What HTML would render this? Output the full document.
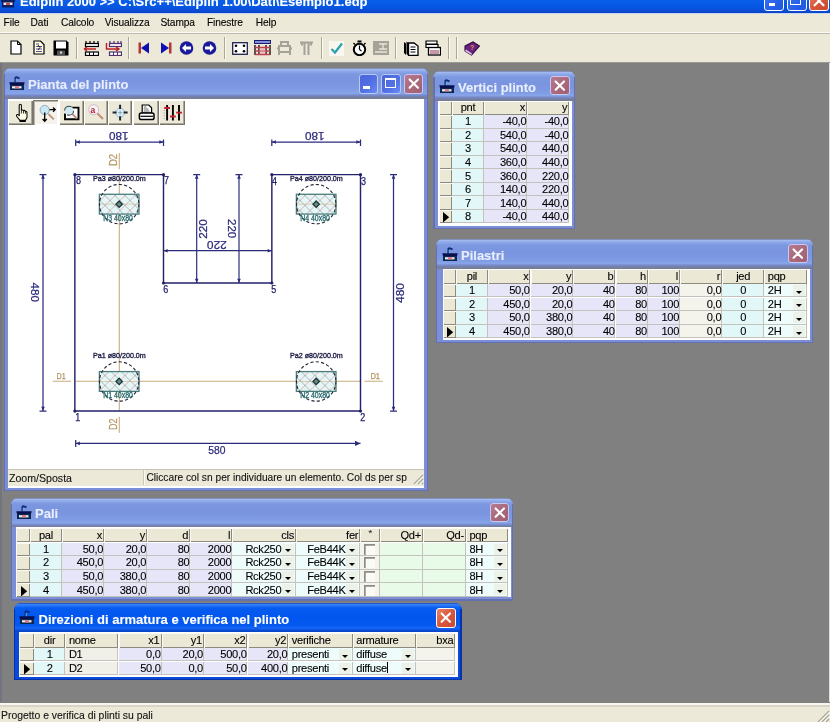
<!DOCTYPE html><html><head><meta charset="utf-8"><style>html,body{margin:0;padding:0;width:830px;height:722px;overflow:hidden;background:#808080;font-family:"Liberation Sans",sans-serif;}div{-webkit-text-stroke:0.1px currentColor}</style></head><body><div style="position:relative;width:830px;height:722px;overflow:hidden;filter:blur(0.3px)">
<div style="position:absolute;left:0.00px;top:0.00px;width:830.00px;height:13.00px;background:linear-gradient(#0a5ee8 0px,#0558e4 6px,#0a4ed8 10px,#0c44c4 13px)"></div>
<div style="position:absolute;left:20.00px;top:-4.80px;font-size:13px;line-height:13px;color:#fff;font-weight:bold;white-space:nowrap;">Ediplin 2000 &gt;&gt; C:\Src++\Ediplin 1.00\Dati\Esempio1.edp</div>
<svg style="position:absolute;left:0;top:-6px" width="16" height="14" viewBox="0 0 16 14"><path d="M0.5 6 H15.5 L14 9 V13.5 H2 V9 Z" fill="#0c1c5c"/><rect x="3.5" y="8.5" width="9" height="2.5" fill="#e8e8f0"/><rect x="6" y="8.8" width="4" height="2" fill="#c04040"/></svg>
<div style="position:absolute;left:764.40px;top:-9.00px;width:18.10px;height:18.10px;border:1.2px solid #ffffff;border-radius:3px;background:linear-gradient(135deg,#3a78f4,#2a64ea 50%,#1e56e0)"><div style="position:absolute;left:3.3px;top:11.2px;width:6.7px;height:3px;background:#fff"></div></div>
<div style="position:absolute;left:786.60px;top:-9.00px;width:18.10px;height:18.10px;border:1.2px solid #ffffff;border-radius:3px;background:linear-gradient(135deg,#3a78f4,#2a64ea 50%,#1e56e0)"><div style="position:absolute;left:2.7px;top:3.3px;width:8.6px;height:6.6px;border:1.3px solid #fff;border-top-width:2.7px"></div></div>
<div style="position:absolute;left:808.90px;top:-9.00px;width:18.10px;height:18.10px;border:1.2px solid #ffffff;border-radius:3px;background:linear-gradient(135deg,#e9826a,#d8573c 50%,#c94a30)"><svg width="18.10" height="18.10" style="position:absolute;left:0;top:0"><path d="M4.6 4.4 L13.50 13.30 M13.50 4.4 L4.6 13.30" stroke="#fff" stroke-width="2.1" stroke-linecap="round"/></svg></div>
<div style="position:absolute;left:0.00px;top:13.00px;width:830.00px;height:20.00px;background:#ece9d8"></div>
<div style="position:absolute;left:0.00px;top:13.00px;width:830.00px;height:1.00px;background:#c9d6f0"></div>
<div style="position:absolute;left:0.00px;top:31.80px;width:830.00px;height:1.00px;background:#fbfaf5"></div>
<div style="position:absolute;left:0.00px;top:32.80px;width:830.00px;height:1.20px;background:#bdb9ab"></div>
<div style="position:absolute;left:0.00px;top:34.00px;width:830.00px;height:1.50px;background:#fbfaf5"></div>
<div style="position:absolute;left:3.60px;top:18.17px;font-size:10.2px;line-height:10.2px;color:#000;font-weight:normal;white-space:nowrap;letter-spacing:-0.1px;">File</div>
<div style="position:absolute;left:30.60px;top:18.17px;font-size:10.2px;line-height:10.2px;color:#000;font-weight:normal;white-space:nowrap;letter-spacing:-0.1px;">Dati</div>
<div style="position:absolute;left:60.90px;top:18.17px;font-size:10.2px;line-height:10.2px;color:#000;font-weight:normal;white-space:nowrap;letter-spacing:-0.1px;">Calcolo</div>
<div style="position:absolute;left:104.80px;top:18.17px;font-size:10.2px;line-height:10.2px;color:#000;font-weight:normal;white-space:nowrap;letter-spacing:-0.1px;">Visualizza</div>
<div style="position:absolute;left:160.40px;top:18.17px;font-size:10.2px;line-height:10.2px;color:#000;font-weight:normal;white-space:nowrap;letter-spacing:-0.1px;">Stampa</div>
<div style="position:absolute;left:206.90px;top:18.17px;font-size:10.2px;line-height:10.2px;color:#000;font-weight:normal;white-space:nowrap;letter-spacing:-0.1px;">Finestre</div>
<div style="position:absolute;left:255.80px;top:18.17px;font-size:10.2px;line-height:10.2px;color:#000;font-weight:normal;white-space:nowrap;letter-spacing:-0.1px;">Help</div>
<div style="position:absolute;left:0.00px;top:34.00px;width:830.00px;height:28.00px;background:#ece9d8"></div>
<div style="position:absolute;left:0.00px;top:62.00px;width:830.00px;height:1.00px;background:#9c9a90"></div>
<svg style="position:absolute;left:10.00px;top:40.00px" width="12" height="15" viewBox="0 0 12 15"><path d="M1 1 H7.5 L11 4.5 V14 H1 Z" fill="#fff" stroke="#000" stroke-width="1.2"/><path d="M7.5 1 V4.5 H11" fill="none" stroke="#000" stroke-width="1"/></svg>
<svg style="position:absolute;left:32.50px;top:40.00px" width="12" height="15" viewBox="0 0 12 15"><path d="M1 1 H7.5 L11 4.5 V14 H1 Z" fill="#fffce0" stroke="#000" stroke-width="1.2"/><path d="M3 4 H6 M3 6.5 H9 M3 9 H9 M3 11.5 H9" stroke="#5050a0" stroke-width="1"/><path d="M5 5 L7 7.5 L5 10" stroke="#000" stroke-width="0.8" fill="none"/></svg>
<svg style="position:absolute;left:53.00px;top:39.50px" width="16" height="16" viewBox="0 0 16 16"><path d="M0.5 0.5 H13.5 L15.5 2.5 V15.5 H0.5 Z" fill="#000"/><rect x="3" y="1.5" width="10" height="7" fill="#fff"/><rect x="4" y="10.5" width="8" height="5" fill="#555"/><rect x="7" y="11.5" width="2" height="2" fill="#ddd"/></svg>
<div style="position:absolute;left:75.50px;top:37.00px;width:1.00px;height:22.00px;background:#aca899"></div>
<div style="position:absolute;left:76.50px;top:37.00px;width:1.00px;height:22.00px;background:#fbfaf4"></div>
<svg style="position:absolute;left:83.00px;top:40.00px" width="16" height="16" viewBox="0 0 16 16"><path d="M3 1 V4 M7 1 V4 M11 1 V4 M15 1 V4" stroke="#000" stroke-width="1.2"/><rect x="2.5" y="3.5" width="13" height="3" fill="#fff" stroke="#000" stroke-width="1.2"/><path d="M1 9 H13 M1 9 L4 7 M1 9 L4 11" stroke="#c02020" stroke-width="1.4" fill="none"/><rect x="2.5" y="12" width="13" height="3.5" fill="#fff" stroke="#000" stroke-width="1.2"/><path d="M6.5 12 V15.5 M10.5 12 V15.5" stroke="#000" stroke-width="1"/></svg>
<svg style="position:absolute;left:104.50px;top:40.00px" width="17" height="16" viewBox="0 0 17 16"><path d="M5 1 V4 M9 1 V4 M13 1 V4 M16 1 V4" stroke="#503070" stroke-width="1.2"/><rect x="4.5" y="3.5" width="12" height="3" fill="#fff" stroke="#503070" stroke-width="1.2"/><path d="M1.5 3 V9 H14 M11 7 L14 9 L11 11" stroke="#c02020" stroke-width="1.4" fill="none"/><rect x="4.5" y="12" width="12" height="3.5" fill="#fff" stroke="#503070" stroke-width="1.2"/><path d="M8.5 12 V15.5 M12.5 12 V15.5" stroke="#503070" stroke-width="1"/></svg>
<div style="position:absolute;left:127.50px;top:37.00px;width:1.00px;height:22.00px;background:#aca899"></div>
<div style="position:absolute;left:128.50px;top:37.00px;width:1.00px;height:22.00px;background:#fbfaf4"></div>
<svg style="position:absolute;left:137.50px;top:41.50px" width="12" height="12" viewBox="0 0 12 12"><rect x="0.5" y="0.5" width="2.5" height="11" fill="#b03838"/><path d="M11 0.5 V11.5 L3 6 Z" fill="#1010b0"/></svg>
<svg style="position:absolute;left:159.50px;top:41.50px" width="12" height="12" viewBox="0 0 12 12"><rect x="9" y="0.5" width="2.5" height="11" fill="#b03838"/><path d="M1 0.5 V11.5 L9 6 Z" fill="#1010b0"/></svg>
<svg style="position:absolute;left:179.00px;top:41.00px" width="15" height="14" viewBox="0 0 15 14"><circle cx="7.5" cy="7" r="6.8" fill="#1a1a9a"/><path d="M3 7 L7 3 V5.5 H12 V8.5 H7 V11 Z" fill="#fff"/></svg>
<svg style="position:absolute;left:201.70px;top:41.00px" width="15" height="14" viewBox="0 0 15 14"><circle cx="7.5" cy="7" r="6.8" fill="#1a1a9a"/><path d="M12 7 L8 3 V5.5 H3 V8.5 H8 V11 Z" fill="#fff"/></svg>
<div style="position:absolute;left:224.00px;top:37.00px;width:1.00px;height:22.00px;background:#aca899"></div>
<div style="position:absolute;left:225.00px;top:37.00px;width:1.00px;height:22.00px;background:#fbfaf4"></div>
<svg style="position:absolute;left:231.50px;top:41.50px" width="16" height="13" viewBox="0 0 16 13"><rect x="0.7" y="0.7" width="14.6" height="11.6" fill="#fff" stroke="#202050" stroke-width="1.3"/><circle cx="4" cy="3.8" r="1.3" fill="#000"/><circle cx="12" cy="3.8" r="1.3" fill="#000"/><circle cx="4" cy="9.2" r="1.3" fill="#000"/><circle cx="12" cy="9.2" r="1.3" fill="#000"/></svg>
<svg style="position:absolute;left:254.00px;top:40.00px" width="17" height="16" viewBox="0 0 17 16"><rect x="0.5" y="0.5" width="16" height="3" fill="#8090e0" stroke="#1a1a6a" stroke-width="1"/><path d="M1 5 V15 M16 5 V15 M5 5 V15 M12 5 V15" stroke="#000" stroke-width="1.3"/><path d="M1 7.5 H16 M1 11 H16 M1 14.5 H16" stroke="#c04050" stroke-width="1.5"/><rect x="5.5" y="8" width="6" height="6" fill="#f0a0b0" opacity="0.6"/></svg>
<svg style="position:absolute;left:275.50px;top:40.50px" width="17" height="15" viewBox="0 0 17 15"><path d="M5 1 H12 V5 H5 Z M3 5 H14 V11 H3 Z M1 7.5 H4 M13 7.5 H16 M3 12 V14 M14 12 V14" fill="none" stroke="#a6a298" stroke-width="2"/></svg>
<svg style="position:absolute;left:299.00px;top:40.50px" width="15" height="15" viewBox="0 0 15 15"><path d="M1 1.5 H14 M3 1.5 V4.5 M12 1.5 V4.5 M5.5 2 V14 M9.5 2 V14" stroke="#a6a298" stroke-width="2" fill="none"/></svg>
<div style="position:absolute;left:320.80px;top:37.00px;width:1.00px;height:22.00px;background:#aca899"></div>
<div style="position:absolute;left:321.80px;top:37.00px;width:1.00px;height:22.00px;background:#fbfaf4"></div>
<svg style="position:absolute;left:329.00px;top:40.50px" width="15" height="15" viewBox="0 0 15 15"><rect x="0" y="0" width="15" height="15" fill="#f8f6ee"/><path d="M2.5 8 L6 11.5 L13 2.5" stroke="#2aa0b0" stroke-width="2.2" fill="none"/></svg>
<svg style="position:absolute;left:351.80px;top:40.00px" width="15" height="16" viewBox="0 0 15 16"><rect x="5.5" y="0.5" width="4" height="2" fill="#000"/><path d="M1.5 3 L3 4.5 M13.5 3 L12 4.5" stroke="#000" stroke-width="1.3"/><circle cx="7.5" cy="9.5" r="5.7" fill="#fff" stroke="#000" stroke-width="2"/><path d="M7.5 9.5 V5.5 M7.5 9.5 L9.5 11" stroke="#000" stroke-width="1.2"/></svg>
<svg style="position:absolute;left:373.00px;top:41.00px" width="16" height="14" viewBox="0 0 16 14"><rect x="0" y="0" width="16" height="14" fill="#a6a298"/><path d="M6 3 H14 M10 3 V8 M6 8 H14 M2 11 H14" stroke="#e8e4d8" stroke-width="1.3"/></svg>
<div style="position:absolute;left:394.90px;top:37.00px;width:1.00px;height:22.00px;background:#aca899"></div>
<div style="position:absolute;left:395.90px;top:37.00px;width:1.00px;height:22.00px;background:#fbfaf4"></div>
<svg style="position:absolute;left:403.00px;top:40.00px" width="16" height="16" viewBox="0 0 16 16"><path d="M1 2 V13 L3 15 V3.5 Z M3.5 1.5 V14 L5.5 15.5 V3 Z" fill="#000"/><path d="M5.5 3 H11 L15 6 V15.5 H5.5 Z" fill="#fff" stroke="#000" stroke-width="1.3"/><path d="M7.5 7 H12.5 M7.5 9.5 H12.5 M7.5 12 H12.5" stroke="#000" stroke-width="1"/></svg>
<svg style="position:absolute;left:425.00px;top:40.00px" width="16" height="16" viewBox="0 0 16 16"><path d="M1 1 H12 V4 H1 Z M1 4.5 H13 V7.5 H1 Z" fill="#fff" stroke="#000" stroke-width="1.2"/><rect x="3.5" y="7.5" width="12" height="7.5" fill="#fff" stroke="#000" stroke-width="1.3"/><path d="M5 11 H14 M5 13 H14" stroke="#903050" stroke-width="1.2"/></svg>
<div style="position:absolute;left:447.50px;top:37.00px;width:1.00px;height:22.00px;background:#aca899"></div>
<div style="position:absolute;left:448.50px;top:37.00px;width:1.00px;height:22.00px;background:#fbfaf4"></div>
<div style="position:absolute;left:455.50px;top:37.00px;width:1.00px;height:22.00px;background:#aca899"></div>
<div style="position:absolute;left:456.50px;top:37.00px;width:1.00px;height:22.00px;background:#fbfaf4"></div>
<svg style="position:absolute;left:463.50px;top:40.50px" width="16" height="15" viewBox="0 0 16 15"><path d="M1 5 L9 1 L15.5 5 L7.5 14 L1 10 Z" fill="#6a2080" stroke="#2a0a3a" stroke-width="1.1"/><path d="M1 10 L7.5 14 L8 12.5 L2 8.5" fill="#e0c0e8"/><text x="6.3" y="9" font-family="Liberation Sans" font-weight="bold" font-size="6.5" fill="#f0a040">?</text></svg>
<div style="position:absolute;left:0.00px;top:63.00px;width:830.00px;height:640.00px;background:#808080"></div>
<div style="position:absolute;left:0.00px;top:63.00px;width:2.00px;height:639.00px;background:#74747e"></div>
<div style="position:absolute;left:828.60px;top:63.00px;width:1.40px;height:639.00px;background:#dde1d8"></div>
<div style="position:absolute;left:0.00px;top:702.60px;width:830.00px;height:20.00px;background:#ece9d8"></div>
<div style="position:absolute;left:0.00px;top:702.60px;width:830.00px;height:2.40px;background:#f6f5ee"></div>
<div style="position:absolute;left:0.00px;top:705.00px;width:830.00px;height:2.00px;background:#d9d5c8"></div>
<svg style="position:absolute;left:816px;top:709px" width="14" height="13"><path d="M13 2 L2 13 M13 6 L6 13 M13 10 L10 13" stroke="#a8a492" stroke-width="1.2"/><path d="M13.8 3 L3 13.8 M13.8 7 L7 13.8" stroke="#fff" stroke-width="0.8"/></svg>
<div style="position:absolute;left:1.00px;top:711.10px;font-size:10.4px;line-height:10.4px;color:#111;font-weight:normal;white-space:nowrap;">Progetto e verifica di plinti su pali</div>
<div style="position:absolute;left:3.60px;top:68.30px;width:424.40px;height:423.20px;background:#7a8fd8;border-radius:7px 7px 0 0;overflow:hidden">
<div style="position:absolute;left:0;top:0;width:424.40px;height:30.5px;background:linear-gradient(#6a7498 0px,#a4bcf2 1.2px,#90aaea 3px,#7c98e0 6px,#7a94df 14px,#809ce4 22px,#88a4e8 25.5px,#7488c8 27.5px,#767e9c 29.0px,#767e9c 30.5px)"></div>
<div style="position:absolute;left:0;top:6px;width:1.3px;height:417.20px;background:#6470b0"></div>
<div style="position:absolute;right:0;top:6px;width:1.3px;height:417.20px;background:#6470b0"></div>
<div style="position:absolute;left:0;bottom:0;width:424.40px;height:1.3px;background:#6470b0"></div>
<div style="position:absolute;left:4.70px;top:30.50px;width:416.20px;height:389.00px;background:#fff"></div>
</div>
<svg style="position:absolute;left:9.00px;top:76.00px" width="16" height="15" viewBox="0 0 16 15"><path d="M6.3 6.5 V2.2 Q6.3 1.2 7.5 1.2 L10.5 2.4" stroke="#0e2a78" stroke-width="1.7" fill="none"/><path d="M7.2 3 V6.5" stroke="#7ab8f0" stroke-width="0.9"/><path d="M0.3 6.3 H15.7 L15 9 H1 Z" fill="#08104e"/><rect x="1" y="9" width="14" height="5" fill="#0c2850"/><rect x="3" y="10.2" width="9.5" height="2.2" fill="#e8eef0"/><rect x="6" y="10.2" width="4" height="2.2" fill="#e07888"/></svg>
<div style="position:absolute;left:28.00px;top:77.80px;font-size:13px;line-height:13px;color:#e8eefc;font-weight:bold;white-space:nowrap;">Pianta del plinto</div>
<div style="position:absolute;left:8.30px;top:98.80px;width:416.20px;height:27.20px;background:#fff"></div>
<div style="position:absolute;left:8.20px;top:99.80px;width:25.10px;height:24.80px;background:#ece9d8;box-shadow:inset 1px 1px 0 #ffffff, inset -1px -1px 0 #77756c, inset -2px -2px 0 #aca899"></div>
<div style="position:absolute;left:33.30px;top:99.80px;width:25.20px;height:24.80px;background:#f4f2ea;box-shadow:inset 1px 1px 0 #7c7a70, inset 2px 2px 0 #b8b4a4, inset -1px -1px 0 #ffffff"></div>
<div style="position:absolute;left:58.50px;top:99.80px;width:25.00px;height:24.80px;background:#ece9d8;box-shadow:inset 1px 1px 0 #ffffff, inset -1px -1px 0 #77756c, inset -2px -2px 0 #aca899"></div>
<div style="position:absolute;left:83.50px;top:99.80px;width:24.70px;height:24.80px;background:#ece9d8;box-shadow:inset 1px 1px 0 #ffffff, inset -1px -1px 0 #77756c, inset -2px -2px 0 #aca899"></div>
<div style="position:absolute;left:108.20px;top:99.80px;width:24.30px;height:24.80px;background:#ece9d8;box-shadow:inset 1px 1px 0 #ffffff, inset -1px -1px 0 #77756c, inset -2px -2px 0 #aca899"></div>
<div style="position:absolute;left:132.50px;top:99.80px;width:26.10px;height:24.80px;background:#ece9d8;box-shadow:inset 1px 1px 0 #ffffff, inset -1px -1px 0 #77756c, inset -2px -2px 0 #aca899"></div>
<div style="position:absolute;left:158.60px;top:99.80px;width:26.60px;height:24.80px;background:#ece9d8;box-shadow:inset 1px 1px 0 #ffffff, inset -1px -1px 0 #77756c, inset -2px -2px 0 #aca899"></div>
<svg style="position:absolute;left:0;top:0" width="830" height="722" viewBox="0 0 830 722"><path d="M19.2 114.5 V105.6 Q19.2 104.2 20.3 104.2 Q21.4 104.2 21.4 105.6 V110.3 Q22.6 109.5 23.5 110.5 Q24.8 110 25.4 111.3 Q27 111.2 27 113 V117.5 L25.5 120.2 H19.8 L16.8 116.5 Q16 115 17.2 114.5 Q18.2 114.2 19.2 115.8 Z" fill="#fffde8" stroke="#000" stroke-width="1.05" stroke-linejoin="round"/><path d="M21.4 110.3 V113.5 M23.5 110.5 V113.5 M25.4 111.3 V113.8" stroke="#000" stroke-width="0.8"/><rect x="19.5" y="120" width="6.3" height="2" fill="#000"/><circle cx="44.7" cy="110" r="4.6" fill="#c9e9f2" stroke="#90aec0" stroke-width="1"/><path d="M48.3 113.8 L53.8 119.3" stroke="#c0907a" stroke-width="1.9"/><path d="M44.7 112.5 V121 M42.6 119 L44.7 121.2 L46.8 119" stroke="#000" stroke-width="1.3" fill="none"/><path d="M49.5 109.6 H55 M53 107.5 L55.2 109.6 L53 111.7" stroke="#000" stroke-width="1.3" fill="none"/><path d="M69 107.6 H78.5 V119.3 H65 V113.5" fill="#fff" stroke="#000" stroke-width="1.9"/><circle cx="69.1" cy="110.7" r="4.5" fill="#cfe8f2" stroke="#3a4a50" stroke-width="1.1" stroke-dasharray="9 5"/><path d="M72.4 114 L77 118.6" stroke="#c0907a" stroke-width="1.9"/><circle cx="93.7" cy="109.7" r="5" fill="#f6f4f8" stroke="#d8c4cc" stroke-width="1.2"/><text x="90.6" y="112.8" font-family="Liberation Sans" font-weight="bold" font-size="8.5" fill="#b01830">a</text><path d="M97.5 113.5 L103 119" stroke="#c0907a" stroke-width="2"/><circle cx="120.1" cy="112.6" r="4.5" fill="#d6ecf6" stroke="#a8bccc" stroke-width="1"/><path d="M120.1 104.8 V109 M120.1 116.2 V120.4 M112.6 112.6 H116.6 M123.6 112.6 H127.6" stroke="#1a2630" stroke-width="2"/><path d="M120.1 110.5 V114.7 M118 112.6 H122.2" stroke="#7890a0" stroke-width="0.7"/><path d="M142.2 105 H148.8 L151.6 107.8 V113.2 H142.2 Z" fill="#fff" stroke="#000" stroke-width="1.2"/><path d="M143.8 107 H146.5 M143.8 109 H148.5 M143.8 111 H149.5" stroke="#444" stroke-width="0.8"/><rect x="139.4" y="113" width="14.6" height="6.6" rx="1.8" fill="#fff" stroke="#000" stroke-width="1.5"/><path d="M140.5 116.3 H153" stroke="#000" stroke-width="1.2"/><path d="M167.1 105 V120.4 M172.9 105 V120.4 M179 105 V120.4" stroke="#000" stroke-width="1.9"/><path d="M164.2 108 H170 M170 116.5 H175.8 M176.2 112.6 H182" stroke="#c81c30" stroke-width="1.9"/><path d="M164.2 110 V120" stroke="#9a9a9a" stroke-width="1" stroke-dasharray="1 1.6"/></svg>
<div style="position:absolute;left:8.30px;top:468.50px;width:416.20px;height:19.30px;background:#fff"></div>
<div style="position:absolute;left:8.30px;top:468.60px;width:416.20px;height:17.00px;background:#ece9d8;box-shadow:inset 0 1px 0 #c9c5b5"></div>
<div style="position:absolute;left:142.60px;top:469.50px;width:1.00px;height:15.00px;background:#cdc9b9"></div>
<div style="position:absolute;left:143.60px;top:469.50px;width:1.20px;height:15.00px;background:#fbfaf2"></div>
<div style="position:absolute;left:9.00px;top:473.13px;font-size:10.6px;line-height:10.6px;color:#111;font-weight:normal;white-space:nowrap;">Zoom/Sposta</div>
<div style="position:absolute;left:146.40px;top:473.47px;font-size:10.2px;line-height:10.2px;color:#111;font-weight:normal;white-space:nowrap;">Cliccare col sn per individuare un elemento. Col ds per sp</div>
<svg style="position:absolute;left:411.5px;top:473px" width="12" height="13"><path d="M11 2 L2 11 M11 6 L6 11 M11 10 L10 11" stroke="#a8a492" stroke-width="1.2"/><path d="M11.5 3 L3 11.5 M11.5 7 L7 11.5" stroke="#fff" stroke-width="0.8"/></svg>
<div style="position:absolute;left:358.60px;top:74.20px;width:17.60px;height:17.60px;border:1.2px solid #b9c8f6;border-radius:3px;background:linear-gradient(135deg,#4a66d8,#5272e6 60%,#6a8cf4)"><div style="position:absolute;left:3.3px;top:11.2px;width:6.7px;height:3px;background:#fff"></div></div>
<div style="position:absolute;left:381.30px;top:74.20px;width:17.60px;height:17.60px;border:1.2px solid #b9c8f6;border-radius:3px;background:linear-gradient(135deg,#4a66d8,#5272e6 60%,#6a8cf4)"><div style="position:absolute;left:2.7px;top:3.3px;width:8.6px;height:6.6px;border:1.3px solid #fff;border-top-width:2.7px"></div></div>
<div style="position:absolute;left:403.50px;top:74.20px;width:17.60px;height:17.60px;border:1.2px solid #cdc6ee;border-radius:3px;background:linear-gradient(135deg,#b77a92,#a96a7c 50%,#9e6072)"><svg width="17.60" height="17.60" style="position:absolute;left:0;top:0"><path d="M4.6 4.4 L13.00 12.80 M13.00 4.4 L4.6 12.80" stroke="#fff" stroke-width="2.1" stroke-linecap="round"/></svg></div>
<div style="position:absolute;left:433.30px;top:71.00px;width:141.70px;height:158.00px;background:#7a8fd8;border-radius:7px 7px 0 0;overflow:hidden">
<div style="position:absolute;left:0;top:0;width:141.70px;height:29.5px;background:linear-gradient(#6a7498 0px,#a4bcf2 1.2px,#90aaea 3px,#7c98e0 6px,#7a94df 14px,#809ce4 22px,#88a4e8 24.5px,#7488c8 26.5px,#767e9c 28.0px,#767e9c 29.5px)"></div>
<div style="position:absolute;left:0;top:6px;width:1.3px;height:152.00px;background:#6470b0"></div>
<div style="position:absolute;right:0;top:6px;width:1.3px;height:152.00px;background:#6470b0"></div>
<div style="position:absolute;left:0;bottom:0;width:141.70px;height:1.3px;background:#6470b0"></div>
<div style="position:absolute;left:5.20px;top:29.50px;width:133.50px;height:125.30px;background:#fff"></div>
</div>
<svg style="position:absolute;left:438.50px;top:78.50px" width="16" height="15" viewBox="0 0 16 15"><path d="M6.3 6.5 V2.2 Q6.3 1.2 7.5 1.2 L10.5 2.4" stroke="#0e2a78" stroke-width="1.7" fill="none"/><path d="M7.2 3 V6.5" stroke="#7ab8f0" stroke-width="0.9"/><path d="M0.3 6.3 H15.7 L15 9 H1 Z" fill="#08104e"/><rect x="1" y="9" width="14" height="5" fill="#0c2850"/><rect x="3" y="10.2" width="9.5" height="2.2" fill="#e8eef0"/><rect x="6" y="10.2" width="4" height="2.2" fill="#e07888"/></svg>
<div style="position:absolute;left:458.00px;top:80.50px;font-size:13px;line-height:13px;color:#e8eefc;font-weight:bold;white-space:nowrap;">Vertici plinto</div>
<div style="position:absolute;left:550.00px;top:75.90px;width:17.60px;height:17.60px;border:1.2px solid #cdc6ee;border-radius:3px;background:linear-gradient(135deg,#b77a92,#a96a7c 50%,#9e6072)"><svg width="17.60" height="17.60" style="position:absolute;left:0;top:0"><path d="M4.6 4.4 L13.00 12.80 M13.00 4.4 L4.6 12.80" stroke="#fff" stroke-width="2.1" stroke-linecap="round"/></svg></div>
<div style="position:absolute;left:438.50px;top:100.50px;width:13.50px;height:14.60px;background:#ece8d6;box-shadow:inset 1px 1px 0 #fbfaf4, inset -1px -1px 0 #8d8a80"></div>
<div style="position:absolute;left:438.50px;top:115.10px;width:13.50px;height:13.55px;background:#ece8d6;box-shadow:inset 1px 1px 0 #fbfaf4, inset -1px -1px 0 #8d8a80"></div>
<div style="position:absolute;left:438.50px;top:128.65px;width:13.50px;height:13.55px;background:#ece8d6;box-shadow:inset 1px 1px 0 #fbfaf4, inset -1px -1px 0 #8d8a80"></div>
<div style="position:absolute;left:438.50px;top:142.20px;width:13.50px;height:13.55px;background:#ece8d6;box-shadow:inset 1px 1px 0 #fbfaf4, inset -1px -1px 0 #8d8a80"></div>
<div style="position:absolute;left:438.50px;top:155.75px;width:13.50px;height:13.55px;background:#ece8d6;box-shadow:inset 1px 1px 0 #fbfaf4, inset -1px -1px 0 #8d8a80"></div>
<div style="position:absolute;left:438.50px;top:169.30px;width:13.50px;height:13.55px;background:#ece8d6;box-shadow:inset 1px 1px 0 #fbfaf4, inset -1px -1px 0 #8d8a80"></div>
<div style="position:absolute;left:438.50px;top:182.85px;width:13.50px;height:13.55px;background:#ece8d6;box-shadow:inset 1px 1px 0 #fbfaf4, inset -1px -1px 0 #8d8a80"></div>
<div style="position:absolute;left:438.50px;top:196.40px;width:13.50px;height:13.55px;background:#ece8d6;box-shadow:inset 1px 1px 0 #fbfaf4, inset -1px -1px 0 #8d8a80"></div>
<div style="position:absolute;left:438.50px;top:209.95px;width:13.50px;height:13.55px;background:#ece8d6;box-shadow:inset 1px 1px 0 #fbfaf4, inset -1px -1px 0 #8d8a80"></div>
<div style="position:absolute;left:452.00px;top:100.50px;width:31.90px;height:14.60px;background:#ece8d6;box-shadow:inset 1px 1px 0 #fbfaf4, inset -1px -1px 0 #8d8a80"></div>
<div style="position:absolute;left:452.00px;top:115.10px;width:31.90px;height:13.55px;background:#e2f8f8;box-shadow:inset -1px -1px 0 #c4c2bc"></div>
<div style="position:absolute;left:452.00px;top:128.65px;width:31.90px;height:13.55px;background:#e2f8f8;box-shadow:inset -1px -1px 0 #c4c2bc"></div>
<div style="position:absolute;left:452.00px;top:142.20px;width:31.90px;height:13.55px;background:#e2f8f8;box-shadow:inset -1px -1px 0 #c4c2bc"></div>
<div style="position:absolute;left:452.00px;top:155.75px;width:31.90px;height:13.55px;background:#e2f8f8;box-shadow:inset -1px -1px 0 #c4c2bc"></div>
<div style="position:absolute;left:452.00px;top:169.30px;width:31.90px;height:13.55px;background:#e2f8f8;box-shadow:inset -1px -1px 0 #c4c2bc"></div>
<div style="position:absolute;left:452.00px;top:182.85px;width:31.90px;height:13.55px;background:#e2f8f8;box-shadow:inset -1px -1px 0 #c4c2bc"></div>
<div style="position:absolute;left:452.00px;top:196.40px;width:31.90px;height:13.55px;background:#e2f8f8;box-shadow:inset -1px -1px 0 #c4c2bc"></div>
<div style="position:absolute;left:452.00px;top:209.95px;width:31.90px;height:13.55px;background:#e2f8f8;box-shadow:inset -1px -1px 0 #c4c2bc"></div>
<div style="position:absolute;left:483.90px;top:100.50px;width:43.20px;height:14.60px;background:#ece8d6;box-shadow:inset 1px 1px 0 #fbfaf4, inset -1px -1px 0 #8d8a80"></div>
<div style="position:absolute;left:483.90px;top:115.10px;width:43.20px;height:13.55px;background:#e6e6f8;box-shadow:inset -1px -1px 0 #c4c2bc"></div>
<div style="position:absolute;left:483.90px;top:128.65px;width:43.20px;height:13.55px;background:#e6e6f8;box-shadow:inset -1px -1px 0 #c4c2bc"></div>
<div style="position:absolute;left:483.90px;top:142.20px;width:43.20px;height:13.55px;background:#e6e6f8;box-shadow:inset -1px -1px 0 #c4c2bc"></div>
<div style="position:absolute;left:483.90px;top:155.75px;width:43.20px;height:13.55px;background:#e6e6f8;box-shadow:inset -1px -1px 0 #c4c2bc"></div>
<div style="position:absolute;left:483.90px;top:169.30px;width:43.20px;height:13.55px;background:#e6e6f8;box-shadow:inset -1px -1px 0 #c4c2bc"></div>
<div style="position:absolute;left:483.90px;top:182.85px;width:43.20px;height:13.55px;background:#e6e6f8;box-shadow:inset -1px -1px 0 #c4c2bc"></div>
<div style="position:absolute;left:483.90px;top:196.40px;width:43.20px;height:13.55px;background:#e6e6f8;box-shadow:inset -1px -1px 0 #c4c2bc"></div>
<div style="position:absolute;left:483.90px;top:209.95px;width:43.20px;height:13.55px;background:#e6e6f8;box-shadow:inset -1px -1px 0 #c4c2bc"></div>
<div style="position:absolute;left:527.10px;top:100.50px;width:42.10px;height:14.60px;background:#ece8d6;box-shadow:inset 1px 1px 0 #fbfaf4, inset -1px -1px 0 #8d8a80"></div>
<div style="position:absolute;left:527.10px;top:115.10px;width:42.10px;height:13.55px;background:#e6e6f8;box-shadow:inset -1px -1px 0 #c4c2bc"></div>
<div style="position:absolute;left:527.10px;top:128.65px;width:42.10px;height:13.55px;background:#e6e6f8;box-shadow:inset -1px -1px 0 #c4c2bc"></div>
<div style="position:absolute;left:527.10px;top:142.20px;width:42.10px;height:13.55px;background:#e6e6f8;box-shadow:inset -1px -1px 0 #c4c2bc"></div>
<div style="position:absolute;left:527.10px;top:155.75px;width:42.10px;height:13.55px;background:#e6e6f8;box-shadow:inset -1px -1px 0 #c4c2bc"></div>
<div style="position:absolute;left:527.10px;top:169.30px;width:42.10px;height:13.55px;background:#e6e6f8;box-shadow:inset -1px -1px 0 #c4c2bc"></div>
<div style="position:absolute;left:527.10px;top:182.85px;width:42.10px;height:13.55px;background:#e6e6f8;box-shadow:inset -1px -1px 0 #c4c2bc"></div>
<div style="position:absolute;left:527.10px;top:196.40px;width:42.10px;height:13.55px;background:#e6e6f8;box-shadow:inset -1px -1px 0 #c4c2bc"></div>
<div style="position:absolute;left:527.10px;top:209.95px;width:42.10px;height:13.55px;background:#e6e6f8;box-shadow:inset -1px -1px 0 #c4c2bc"></div>
<div style="position:absolute;left:317.95px;width:300px;text-align:center;top:102.20px;font-size:11.1px;line-height:11.1px;color:#000;font-weight:normal;white-space:nowrap;letter-spacing:-0.28px;">pnt</div>
<div style="position:absolute;left:225.10px;width:300px;text-align:right;top:102.20px;font-size:11.1px;line-height:11.1px;color:#000;font-weight:normal;white-space:nowrap;letter-spacing:-0.28px;">x</div>
<div style="position:absolute;left:267.20px;width:300px;text-align:right;top:102.20px;font-size:11.1px;line-height:11.1px;color:#000;font-weight:normal;white-space:nowrap;letter-spacing:-0.28px;">y</div>
<div style="position:absolute;left:317.95px;width:300px;text-align:center;top:116.30px;font-size:11.1px;line-height:11.1px;color:#000;font-weight:normal;white-space:nowrap;letter-spacing:-0.28px;">1</div>
<div style="position:absolute;left:226.30px;width:300px;text-align:right;top:116.30px;font-size:11.1px;line-height:11.1px;color:#000;font-weight:normal;white-space:nowrap;letter-spacing:-0.28px;">-40,0</div>
<div style="position:absolute;left:268.40px;width:300px;text-align:right;top:116.30px;font-size:11.1px;line-height:11.1px;color:#000;font-weight:normal;white-space:nowrap;letter-spacing:-0.28px;">-40,0</div>
<div style="position:absolute;left:317.95px;width:300px;text-align:center;top:129.85px;font-size:11.1px;line-height:11.1px;color:#000;font-weight:normal;white-space:nowrap;letter-spacing:-0.28px;">2</div>
<div style="position:absolute;left:226.30px;width:300px;text-align:right;top:129.85px;font-size:11.1px;line-height:11.1px;color:#000;font-weight:normal;white-space:nowrap;letter-spacing:-0.28px;">540,0</div>
<div style="position:absolute;left:268.40px;width:300px;text-align:right;top:129.85px;font-size:11.1px;line-height:11.1px;color:#000;font-weight:normal;white-space:nowrap;letter-spacing:-0.28px;">-40,0</div>
<div style="position:absolute;left:317.95px;width:300px;text-align:center;top:143.40px;font-size:11.1px;line-height:11.1px;color:#000;font-weight:normal;white-space:nowrap;letter-spacing:-0.28px;">3</div>
<div style="position:absolute;left:226.30px;width:300px;text-align:right;top:143.40px;font-size:11.1px;line-height:11.1px;color:#000;font-weight:normal;white-space:nowrap;letter-spacing:-0.28px;">540,0</div>
<div style="position:absolute;left:268.40px;width:300px;text-align:right;top:143.40px;font-size:11.1px;line-height:11.1px;color:#000;font-weight:normal;white-space:nowrap;letter-spacing:-0.28px;">440,0</div>
<div style="position:absolute;left:317.95px;width:300px;text-align:center;top:156.95px;font-size:11.1px;line-height:11.1px;color:#000;font-weight:normal;white-space:nowrap;letter-spacing:-0.28px;">4</div>
<div style="position:absolute;left:226.30px;width:300px;text-align:right;top:156.95px;font-size:11.1px;line-height:11.1px;color:#000;font-weight:normal;white-space:nowrap;letter-spacing:-0.28px;">360,0</div>
<div style="position:absolute;left:268.40px;width:300px;text-align:right;top:156.95px;font-size:11.1px;line-height:11.1px;color:#000;font-weight:normal;white-space:nowrap;letter-spacing:-0.28px;">440,0</div>
<div style="position:absolute;left:317.95px;width:300px;text-align:center;top:170.50px;font-size:11.1px;line-height:11.1px;color:#000;font-weight:normal;white-space:nowrap;letter-spacing:-0.28px;">5</div>
<div style="position:absolute;left:226.30px;width:300px;text-align:right;top:170.50px;font-size:11.1px;line-height:11.1px;color:#000;font-weight:normal;white-space:nowrap;letter-spacing:-0.28px;">360,0</div>
<div style="position:absolute;left:268.40px;width:300px;text-align:right;top:170.50px;font-size:11.1px;line-height:11.1px;color:#000;font-weight:normal;white-space:nowrap;letter-spacing:-0.28px;">220,0</div>
<div style="position:absolute;left:317.95px;width:300px;text-align:center;top:184.05px;font-size:11.1px;line-height:11.1px;color:#000;font-weight:normal;white-space:nowrap;letter-spacing:-0.28px;">6</div>
<div style="position:absolute;left:226.30px;width:300px;text-align:right;top:184.05px;font-size:11.1px;line-height:11.1px;color:#000;font-weight:normal;white-space:nowrap;letter-spacing:-0.28px;">140,0</div>
<div style="position:absolute;left:268.40px;width:300px;text-align:right;top:184.05px;font-size:11.1px;line-height:11.1px;color:#000;font-weight:normal;white-space:nowrap;letter-spacing:-0.28px;">220,0</div>
<div style="position:absolute;left:317.95px;width:300px;text-align:center;top:197.60px;font-size:11.1px;line-height:11.1px;color:#000;font-weight:normal;white-space:nowrap;letter-spacing:-0.28px;">7</div>
<div style="position:absolute;left:226.30px;width:300px;text-align:right;top:197.60px;font-size:11.1px;line-height:11.1px;color:#000;font-weight:normal;white-space:nowrap;letter-spacing:-0.28px;">140,0</div>
<div style="position:absolute;left:268.40px;width:300px;text-align:right;top:197.60px;font-size:11.1px;line-height:11.1px;color:#000;font-weight:normal;white-space:nowrap;letter-spacing:-0.28px;">440,0</div>
<div style="position:absolute;left:317.95px;width:300px;text-align:center;top:211.15px;font-size:11.1px;line-height:11.1px;color:#000;font-weight:normal;white-space:nowrap;letter-spacing:-0.28px;">8</div>
<div style="position:absolute;left:226.30px;width:300px;text-align:right;top:211.15px;font-size:11.1px;line-height:11.1px;color:#000;font-weight:normal;white-space:nowrap;letter-spacing:-0.28px;">-40,0</div>
<div style="position:absolute;left:268.40px;width:300px;text-align:right;top:211.15px;font-size:11.1px;line-height:11.1px;color:#000;font-weight:normal;white-space:nowrap;letter-spacing:-0.28px;">440,0</div>
<svg style="position:absolute;left:443.20px;top:212.15px" width="7" height="10.5"><path d="M0 0 L6.2 5.25 L0 10.5 Z" fill="#000"/></svg>
<div style="position:absolute;left:436.00px;top:239.00px;width:377.00px;height:104.00px;background:#7a8fd8;border-radius:7px 7px 0 0;overflow:hidden">
<div style="position:absolute;left:0;top:0;width:377.00px;height:29.5px;background:linear-gradient(#6a7498 0px,#a4bcf2 1.2px,#90aaea 3px,#7c98e0 6px,#7a94df 14px,#809ce4 22px,#88a4e8 24.5px,#7488c8 26.5px,#767e9c 28.0px,#767e9c 29.5px)"></div>
<div style="position:absolute;left:0;top:6px;width:1.3px;height:98.00px;background:#6470b0"></div>
<div style="position:absolute;right:0;top:6px;width:1.3px;height:98.00px;background:#6470b0"></div>
<div style="position:absolute;left:0;bottom:0;width:377.00px;height:1.3px;background:#6470b0"></div>
<div style="position:absolute;left:6.50px;top:29.70px;width:367.50px;height:71.30px;background:#fff"></div>
</div>
<svg style="position:absolute;left:442.20px;top:246.80px" width="16" height="15" viewBox="0 0 16 15"><path d="M6.3 6.5 V2.2 Q6.3 1.2 7.5 1.2 L10.5 2.4" stroke="#0e2a78" stroke-width="1.7" fill="none"/><path d="M7.2 3 V6.5" stroke="#7ab8f0" stroke-width="0.9"/><path d="M0.3 6.3 H15.7 L15 9 H1 Z" fill="#08104e"/><rect x="1" y="9" width="14" height="5" fill="#0c2850"/><rect x="3" y="10.2" width="9.5" height="2.2" fill="#e8eef0"/><rect x="6" y="10.2" width="4" height="2.2" fill="#e07888"/></svg>
<div style="position:absolute;left:461.00px;top:248.50px;font-size:13px;line-height:13px;color:#e8eefc;font-weight:bold;white-space:nowrap;">Pilastri</div>
<div style="position:absolute;left:788.00px;top:243.80px;width:17.60px;height:17.60px;border:1.2px solid #cdc6ee;border-radius:3px;background:linear-gradient(135deg,#b77a92,#a96a7c 50%,#9e6072)"><svg width="17.60" height="17.60" style="position:absolute;left:0;top:0"><path d="M4.6 4.4 L13.00 12.80 M13.00 4.4 L4.6 12.80" stroke="#fff" stroke-width="2.1" stroke-linecap="round"/></svg></div>
<div style="position:absolute;left:442.50px;top:269.30px;width:13.40px;height:14.60px;background:#ece8d6;box-shadow:inset 1px 1px 0 #fbfaf4, inset -1px -1px 0 #8d8a80"></div>
<div style="position:absolute;left:442.50px;top:283.90px;width:13.40px;height:13.60px;background:#ece8d6;box-shadow:inset 1px 1px 0 #fbfaf4, inset -1px -1px 0 #8d8a80"></div>
<div style="position:absolute;left:442.50px;top:297.50px;width:13.40px;height:13.60px;background:#ece8d6;box-shadow:inset 1px 1px 0 #fbfaf4, inset -1px -1px 0 #8d8a80"></div>
<div style="position:absolute;left:442.50px;top:311.10px;width:13.40px;height:13.60px;background:#ece8d6;box-shadow:inset 1px 1px 0 #fbfaf4, inset -1px -1px 0 #8d8a80"></div>
<div style="position:absolute;left:442.50px;top:324.70px;width:13.40px;height:13.60px;background:#ece8d6;box-shadow:inset 1px 1px 0 #fbfaf4, inset -1px -1px 0 #8d8a80"></div>
<div style="position:absolute;left:455.90px;top:269.30px;width:32.00px;height:14.60px;background:#ece8d6;box-shadow:inset 1px 1px 0 #fbfaf4, inset -1px -1px 0 #8d8a80"></div>
<div style="position:absolute;left:455.90px;top:283.90px;width:32.00px;height:13.60px;background:#e2f8f8;box-shadow:inset -1px -1px 0 #c4c2bc"></div>
<div style="position:absolute;left:455.90px;top:297.50px;width:32.00px;height:13.60px;background:#e2f8f8;box-shadow:inset -1px -1px 0 #c4c2bc"></div>
<div style="position:absolute;left:455.90px;top:311.10px;width:32.00px;height:13.60px;background:#e2f8f8;box-shadow:inset -1px -1px 0 #c4c2bc"></div>
<div style="position:absolute;left:455.90px;top:324.70px;width:32.00px;height:13.60px;background:#e2f8f8;box-shadow:inset -1px -1px 0 #c4c2bc"></div>
<div style="position:absolute;left:487.90px;top:269.30px;width:42.60px;height:14.60px;background:#ece8d6;box-shadow:inset 1px 1px 0 #fbfaf4, inset -1px -1px 0 #8d8a80"></div>
<div style="position:absolute;left:487.90px;top:283.90px;width:42.60px;height:13.60px;background:#e6e6f8;box-shadow:inset -1px -1px 0 #c4c2bc"></div>
<div style="position:absolute;left:487.90px;top:297.50px;width:42.60px;height:13.60px;background:#e6e6f8;box-shadow:inset -1px -1px 0 #c4c2bc"></div>
<div style="position:absolute;left:487.90px;top:311.10px;width:42.60px;height:13.60px;background:#e6e6f8;box-shadow:inset -1px -1px 0 #c4c2bc"></div>
<div style="position:absolute;left:487.90px;top:324.70px;width:42.60px;height:13.60px;background:#e6e6f8;box-shadow:inset -1px -1px 0 #c4c2bc"></div>
<div style="position:absolute;left:530.50px;top:269.30px;width:42.70px;height:14.60px;background:#ece8d6;box-shadow:inset 1px 1px 0 #fbfaf4, inset -1px -1px 0 #8d8a80"></div>
<div style="position:absolute;left:530.50px;top:283.90px;width:42.70px;height:13.60px;background:#e6e6f8;box-shadow:inset -1px -1px 0 #c4c2bc"></div>
<div style="position:absolute;left:530.50px;top:297.50px;width:42.70px;height:13.60px;background:#e6e6f8;box-shadow:inset -1px -1px 0 #c4c2bc"></div>
<div style="position:absolute;left:530.50px;top:311.10px;width:42.70px;height:13.60px;background:#e6e6f8;box-shadow:inset -1px -1px 0 #c4c2bc"></div>
<div style="position:absolute;left:530.50px;top:324.70px;width:42.70px;height:13.60px;background:#e6e6f8;box-shadow:inset -1px -1px 0 #c4c2bc"></div>
<div style="position:absolute;left:573.20px;top:269.30px;width:42.30px;height:14.60px;background:#ece8d6;box-shadow:inset 1px 1px 0 #fbfaf4, inset -1px -1px 0 #8d8a80"></div>
<div style="position:absolute;left:573.20px;top:283.90px;width:42.30px;height:13.60px;background:#e6e6f8;box-shadow:inset -1px -1px 0 #c4c2bc"></div>
<div style="position:absolute;left:573.20px;top:297.50px;width:42.30px;height:13.60px;background:#e6e6f8;box-shadow:inset -1px -1px 0 #c4c2bc"></div>
<div style="position:absolute;left:573.20px;top:311.10px;width:42.30px;height:13.60px;background:#e6e6f8;box-shadow:inset -1px -1px 0 #c4c2bc"></div>
<div style="position:absolute;left:573.20px;top:324.70px;width:42.30px;height:13.60px;background:#e6e6f8;box-shadow:inset -1px -1px 0 #c4c2bc"></div>
<div style="position:absolute;left:615.50px;top:269.30px;width:32.30px;height:14.60px;background:#ece8d6;box-shadow:inset 1px 1px 0 #fbfaf4, inset -1px -1px 0 #8d8a80"></div>
<div style="position:absolute;left:615.50px;top:283.90px;width:32.30px;height:13.60px;background:#e6e6f8;box-shadow:inset -1px -1px 0 #c4c2bc"></div>
<div style="position:absolute;left:615.50px;top:297.50px;width:32.30px;height:13.60px;background:#e6e6f8;box-shadow:inset -1px -1px 0 #c4c2bc"></div>
<div style="position:absolute;left:615.50px;top:311.10px;width:32.30px;height:13.60px;background:#e6e6f8;box-shadow:inset -1px -1px 0 #c4c2bc"></div>
<div style="position:absolute;left:615.50px;top:324.70px;width:32.30px;height:13.60px;background:#e6e6f8;box-shadow:inset -1px -1px 0 #c4c2bc"></div>
<div style="position:absolute;left:647.80px;top:269.30px;width:32.10px;height:14.60px;background:#ece8d6;box-shadow:inset 1px 1px 0 #fbfaf4, inset -1px -1px 0 #8d8a80"></div>
<div style="position:absolute;left:647.80px;top:283.90px;width:32.10px;height:13.60px;background:#e6e6f8;box-shadow:inset -1px -1px 0 #c4c2bc"></div>
<div style="position:absolute;left:647.80px;top:297.50px;width:32.10px;height:13.60px;background:#e6e6f8;box-shadow:inset -1px -1px 0 #c4c2bc"></div>
<div style="position:absolute;left:647.80px;top:311.10px;width:32.10px;height:13.60px;background:#e6e6f8;box-shadow:inset -1px -1px 0 #c4c2bc"></div>
<div style="position:absolute;left:647.80px;top:324.70px;width:32.10px;height:13.60px;background:#e6e6f8;box-shadow:inset -1px -1px 0 #c4c2bc"></div>
<div style="position:absolute;left:679.90px;top:269.30px;width:42.20px;height:14.60px;background:#ece8d6;box-shadow:inset 1px 1px 0 #fbfaf4, inset -1px -1px 0 #8d8a80"></div>
<div style="position:absolute;left:679.90px;top:283.90px;width:42.20px;height:13.60px;background:#f4f3ec;box-shadow:inset -1px -1px 0 #c4c2bc"></div>
<div style="position:absolute;left:679.90px;top:297.50px;width:42.20px;height:13.60px;background:#f4f3ec;box-shadow:inset -1px -1px 0 #c4c2bc"></div>
<div style="position:absolute;left:679.90px;top:311.10px;width:42.20px;height:13.60px;background:#f4f3ec;box-shadow:inset -1px -1px 0 #c4c2bc"></div>
<div style="position:absolute;left:679.90px;top:324.70px;width:42.20px;height:13.60px;background:#f4f3ec;box-shadow:inset -1px -1px 0 #c4c2bc"></div>
<div style="position:absolute;left:722.10px;top:269.30px;width:42.10px;height:14.60px;background:#ece8d6;box-shadow:inset 1px 1px 0 #fbfaf4, inset -1px -1px 0 #8d8a80"></div>
<div style="position:absolute;left:722.10px;top:283.90px;width:42.10px;height:13.60px;background:#e2f8f8;box-shadow:inset -1px -1px 0 #c4c2bc"></div>
<div style="position:absolute;left:722.10px;top:297.50px;width:42.10px;height:13.60px;background:#e2f8f8;box-shadow:inset -1px -1px 0 #c4c2bc"></div>
<div style="position:absolute;left:722.10px;top:311.10px;width:42.10px;height:13.60px;background:#e2f8f8;box-shadow:inset -1px -1px 0 #c4c2bc"></div>
<div style="position:absolute;left:722.10px;top:324.70px;width:42.10px;height:13.60px;background:#e2f8f8;box-shadow:inset -1px -1px 0 #c4c2bc"></div>
<div style="position:absolute;left:764.20px;top:269.30px;width:42.60px;height:14.60px;background:#ece8d6;box-shadow:inset 1px 1px 0 #fbfaf4, inset -1px -1px 0 #8d8a80"></div>
<div style="position:absolute;left:764.20px;top:283.90px;width:42.60px;height:13.60px;background:#eefcfc;box-shadow:inset -1px -1px 0 #c4c2bc"></div>
<div style="position:absolute;left:764.20px;top:297.50px;width:42.60px;height:13.60px;background:#eefcfc;box-shadow:inset -1px -1px 0 #c4c2bc"></div>
<div style="position:absolute;left:764.20px;top:311.10px;width:42.60px;height:13.60px;background:#eefcfc;box-shadow:inset -1px -1px 0 #c4c2bc"></div>
<div style="position:absolute;left:764.20px;top:324.70px;width:42.60px;height:13.60px;background:#eefcfc;box-shadow:inset -1px -1px 0 #c4c2bc"></div>
<div style="position:absolute;left:321.90px;width:300px;text-align:center;top:271.00px;font-size:11.1px;line-height:11.1px;color:#000;font-weight:normal;white-space:nowrap;letter-spacing:-0.28px;">pil</div>
<div style="position:absolute;left:228.50px;width:300px;text-align:right;top:271.00px;font-size:11.1px;line-height:11.1px;color:#000;font-weight:normal;white-space:nowrap;letter-spacing:-0.28px;">x</div>
<div style="position:absolute;left:271.20px;width:300px;text-align:right;top:271.00px;font-size:11.1px;line-height:11.1px;color:#000;font-weight:normal;white-space:nowrap;letter-spacing:-0.28px;">y</div>
<div style="position:absolute;left:313.50px;width:300px;text-align:right;top:271.00px;font-size:11.1px;line-height:11.1px;color:#000;font-weight:normal;white-space:nowrap;letter-spacing:-0.28px;">b</div>
<div style="position:absolute;left:345.80px;width:300px;text-align:right;top:271.00px;font-size:11.1px;line-height:11.1px;color:#000;font-weight:normal;white-space:nowrap;letter-spacing:-0.28px;">h</div>
<div style="position:absolute;left:377.90px;width:300px;text-align:right;top:271.00px;font-size:11.1px;line-height:11.1px;color:#000;font-weight:normal;white-space:nowrap;letter-spacing:-0.28px;">l</div>
<div style="position:absolute;left:420.10px;width:300px;text-align:right;top:271.00px;font-size:11.1px;line-height:11.1px;color:#000;font-weight:normal;white-space:nowrap;letter-spacing:-0.28px;">r</div>
<div style="position:absolute;left:593.15px;width:300px;text-align:center;top:271.00px;font-size:11.1px;line-height:11.1px;color:#000;font-weight:normal;white-space:nowrap;letter-spacing:-0.28px;">jed</div>
<div style="position:absolute;left:767.80px;top:271.00px;font-size:11.1px;line-height:11.1px;color:#000;font-weight:normal;white-space:nowrap;letter-spacing:-0.28px;">pqp</div>
<div style="position:absolute;left:321.90px;width:300px;text-align:center;top:285.10px;font-size:11.1px;line-height:11.1px;color:#000;font-weight:normal;white-space:nowrap;letter-spacing:-0.28px;">1</div>
<div style="position:absolute;left:229.70px;width:300px;text-align:right;top:285.10px;font-size:11.1px;line-height:11.1px;color:#000;font-weight:normal;white-space:nowrap;letter-spacing:-0.28px;">50,0</div>
<div style="position:absolute;left:272.40px;width:300px;text-align:right;top:285.10px;font-size:11.1px;line-height:11.1px;color:#000;font-weight:normal;white-space:nowrap;letter-spacing:-0.28px;">20,0</div>
<div style="position:absolute;left:314.70px;width:300px;text-align:right;top:285.10px;font-size:11.1px;line-height:11.1px;color:#000;font-weight:normal;white-space:nowrap;letter-spacing:-0.28px;">40</div>
<div style="position:absolute;left:347.00px;width:300px;text-align:right;top:285.10px;font-size:11.1px;line-height:11.1px;color:#000;font-weight:normal;white-space:nowrap;letter-spacing:-0.28px;">80</div>
<div style="position:absolute;left:379.10px;width:300px;text-align:right;top:285.10px;font-size:11.1px;line-height:11.1px;color:#000;font-weight:normal;white-space:nowrap;letter-spacing:-0.28px;">100</div>
<div style="position:absolute;left:421.30px;width:300px;text-align:right;top:285.10px;font-size:11.1px;line-height:11.1px;color:#000;font-weight:normal;white-space:nowrap;letter-spacing:-0.28px;">0,0</div>
<div style="position:absolute;left:593.15px;width:300px;text-align:center;top:285.10px;font-size:11.1px;line-height:11.1px;color:#000;font-weight:normal;white-space:nowrap;letter-spacing:-0.28px;">0</div>
<div style="position:absolute;left:767.80px;top:285.10px;font-size:11.1px;line-height:11.1px;color:#000;font-weight:normal;white-space:nowrap;letter-spacing:-0.28px;">2H</div>
<div style="position:absolute;left:792.80px;top:284.90px;width:12.00px;height:11.10px;background:rgba(236,233,216,0.55)"></div>
<svg style="position:absolute;left:795.80px;top:290.80px" width="6" height="3"><path d="M0 0 H6 L3 3 Z" fill="#000"/></svg>
<div style="position:absolute;left:321.90px;width:300px;text-align:center;top:298.70px;font-size:11.1px;line-height:11.1px;color:#000;font-weight:normal;white-space:nowrap;letter-spacing:-0.28px;">2</div>
<div style="position:absolute;left:229.70px;width:300px;text-align:right;top:298.70px;font-size:11.1px;line-height:11.1px;color:#000;font-weight:normal;white-space:nowrap;letter-spacing:-0.28px;">450,0</div>
<div style="position:absolute;left:272.40px;width:300px;text-align:right;top:298.70px;font-size:11.1px;line-height:11.1px;color:#000;font-weight:normal;white-space:nowrap;letter-spacing:-0.28px;">20,0</div>
<div style="position:absolute;left:314.70px;width:300px;text-align:right;top:298.70px;font-size:11.1px;line-height:11.1px;color:#000;font-weight:normal;white-space:nowrap;letter-spacing:-0.28px;">40</div>
<div style="position:absolute;left:347.00px;width:300px;text-align:right;top:298.70px;font-size:11.1px;line-height:11.1px;color:#000;font-weight:normal;white-space:nowrap;letter-spacing:-0.28px;">80</div>
<div style="position:absolute;left:379.10px;width:300px;text-align:right;top:298.70px;font-size:11.1px;line-height:11.1px;color:#000;font-weight:normal;white-space:nowrap;letter-spacing:-0.28px;">100</div>
<div style="position:absolute;left:421.30px;width:300px;text-align:right;top:298.70px;font-size:11.1px;line-height:11.1px;color:#000;font-weight:normal;white-space:nowrap;letter-spacing:-0.28px;">0,0</div>
<div style="position:absolute;left:593.15px;width:300px;text-align:center;top:298.70px;font-size:11.1px;line-height:11.1px;color:#000;font-weight:normal;white-space:nowrap;letter-spacing:-0.28px;">0</div>
<div style="position:absolute;left:767.80px;top:298.70px;font-size:11.1px;line-height:11.1px;color:#000;font-weight:normal;white-space:nowrap;letter-spacing:-0.28px;">2H</div>
<div style="position:absolute;left:792.80px;top:298.50px;width:12.00px;height:11.10px;background:rgba(236,233,216,0.55)"></div>
<svg style="position:absolute;left:795.80px;top:304.40px" width="6" height="3"><path d="M0 0 H6 L3 3 Z" fill="#000"/></svg>
<div style="position:absolute;left:321.90px;width:300px;text-align:center;top:312.30px;font-size:11.1px;line-height:11.1px;color:#000;font-weight:normal;white-space:nowrap;letter-spacing:-0.28px;">3</div>
<div style="position:absolute;left:229.70px;width:300px;text-align:right;top:312.30px;font-size:11.1px;line-height:11.1px;color:#000;font-weight:normal;white-space:nowrap;letter-spacing:-0.28px;">50,0</div>
<div style="position:absolute;left:272.40px;width:300px;text-align:right;top:312.30px;font-size:11.1px;line-height:11.1px;color:#000;font-weight:normal;white-space:nowrap;letter-spacing:-0.28px;">380,0</div>
<div style="position:absolute;left:314.70px;width:300px;text-align:right;top:312.30px;font-size:11.1px;line-height:11.1px;color:#000;font-weight:normal;white-space:nowrap;letter-spacing:-0.28px;">40</div>
<div style="position:absolute;left:347.00px;width:300px;text-align:right;top:312.30px;font-size:11.1px;line-height:11.1px;color:#000;font-weight:normal;white-space:nowrap;letter-spacing:-0.28px;">80</div>
<div style="position:absolute;left:379.10px;width:300px;text-align:right;top:312.30px;font-size:11.1px;line-height:11.1px;color:#000;font-weight:normal;white-space:nowrap;letter-spacing:-0.28px;">100</div>
<div style="position:absolute;left:421.30px;width:300px;text-align:right;top:312.30px;font-size:11.1px;line-height:11.1px;color:#000;font-weight:normal;white-space:nowrap;letter-spacing:-0.28px;">0,0</div>
<div style="position:absolute;left:593.15px;width:300px;text-align:center;top:312.30px;font-size:11.1px;line-height:11.1px;color:#000;font-weight:normal;white-space:nowrap;letter-spacing:-0.28px;">0</div>
<div style="position:absolute;left:767.80px;top:312.30px;font-size:11.1px;line-height:11.1px;color:#000;font-weight:normal;white-space:nowrap;letter-spacing:-0.28px;">2H</div>
<div style="position:absolute;left:792.80px;top:312.10px;width:12.00px;height:11.10px;background:rgba(236,233,216,0.55)"></div>
<svg style="position:absolute;left:795.80px;top:318.00px" width="6" height="3"><path d="M0 0 H6 L3 3 Z" fill="#000"/></svg>
<div style="position:absolute;left:321.90px;width:300px;text-align:center;top:325.90px;font-size:11.1px;line-height:11.1px;color:#000;font-weight:normal;white-space:nowrap;letter-spacing:-0.28px;">4</div>
<div style="position:absolute;left:229.70px;width:300px;text-align:right;top:325.90px;font-size:11.1px;line-height:11.1px;color:#000;font-weight:normal;white-space:nowrap;letter-spacing:-0.28px;">450,0</div>
<div style="position:absolute;left:272.40px;width:300px;text-align:right;top:325.90px;font-size:11.1px;line-height:11.1px;color:#000;font-weight:normal;white-space:nowrap;letter-spacing:-0.28px;">380,0</div>
<div style="position:absolute;left:314.70px;width:300px;text-align:right;top:325.90px;font-size:11.1px;line-height:11.1px;color:#000;font-weight:normal;white-space:nowrap;letter-spacing:-0.28px;">40</div>
<div style="position:absolute;left:347.00px;width:300px;text-align:right;top:325.90px;font-size:11.1px;line-height:11.1px;color:#000;font-weight:normal;white-space:nowrap;letter-spacing:-0.28px;">80</div>
<div style="position:absolute;left:379.10px;width:300px;text-align:right;top:325.90px;font-size:11.1px;line-height:11.1px;color:#000;font-weight:normal;white-space:nowrap;letter-spacing:-0.28px;">100</div>
<div style="position:absolute;left:421.30px;width:300px;text-align:right;top:325.90px;font-size:11.1px;line-height:11.1px;color:#000;font-weight:normal;white-space:nowrap;letter-spacing:-0.28px;">0,0</div>
<div style="position:absolute;left:593.15px;width:300px;text-align:center;top:325.90px;font-size:11.1px;line-height:11.1px;color:#000;font-weight:normal;white-space:nowrap;letter-spacing:-0.28px;">0</div>
<div style="position:absolute;left:767.80px;top:325.90px;font-size:11.1px;line-height:11.1px;color:#000;font-weight:normal;white-space:nowrap;letter-spacing:-0.28px;">2H</div>
<div style="position:absolute;left:792.80px;top:325.70px;width:12.00px;height:11.10px;background:rgba(236,233,216,0.55)"></div>
<svg style="position:absolute;left:795.80px;top:331.60px" width="6" height="3"><path d="M0 0 H6 L3 3 Z" fill="#000"/></svg>
<svg style="position:absolute;left:447.20px;top:326.90px" width="7" height="10.5"><path d="M0 0 L6.2 5.25 L0 10.5 Z" fill="#000"/></svg>
<div style="position:absolute;left:11.00px;top:497.50px;width:502.00px;height:103.00px;background:#7a8fd8;border-radius:7px 7px 0 0;overflow:hidden">
<div style="position:absolute;left:0;top:0;width:502.00px;height:29.9px;background:linear-gradient(#6a7498 0px,#a4bcf2 1.2px,#90aaea 3px,#7c98e0 6px,#7a94df 14px,#809ce4 22px,#88a4e8 24.9px,#7488c8 26.9px,#767e9c 28.4px,#767e9c 29.9px)"></div>
<div style="position:absolute;left:0;top:6px;width:1.3px;height:97.00px;background:#6470b0"></div>
<div style="position:absolute;right:0;top:6px;width:1.3px;height:97.00px;background:#6470b0"></div>
<div style="position:absolute;left:0;bottom:0;width:502.00px;height:1.3px;background:#6470b0"></div>
<div style="position:absolute;left:5.00px;top:29.90px;width:494.50px;height:70.10px;background:#fff"></div>
</div>
<svg style="position:absolute;left:16.00px;top:505.00px" width="16" height="15" viewBox="0 0 16 15"><path d="M6.3 6.5 V2.2 Q6.3 1.2 7.5 1.2 L10.5 2.4" stroke="#0e2a78" stroke-width="1.7" fill="none"/><path d="M7.2 3 V6.5" stroke="#7ab8f0" stroke-width="0.9"/><path d="M0.3 6.3 H15.7 L15 9 H1 Z" fill="#08104e"/><rect x="1" y="9" width="14" height="5" fill="#0c2850"/><rect x="3" y="10.2" width="9.5" height="2.2" fill="#e8eef0"/><rect x="6" y="10.2" width="4" height="2.2" fill="#e07888"/></svg>
<div style="position:absolute;left:35.00px;top:507.00px;font-size:13px;line-height:13px;color:#e8eefc;font-weight:bold;white-space:nowrap;">Pali</div>
<div style="position:absolute;left:489.60px;top:502.80px;width:17.60px;height:17.60px;border:1.2px solid #cdc6ee;border-radius:3px;background:linear-gradient(135deg,#b77a92,#a96a7c 50%,#9e6072)"><svg width="17.60" height="17.60" style="position:absolute;left:0;top:0"><path d="M4.6 4.4 L13.00 12.80 M13.00 4.4 L4.6 12.80" stroke="#fff" stroke-width="2.1" stroke-linecap="round"/></svg></div>
<div style="position:absolute;left:16.00px;top:527.90px;width:14.10px;height:14.60px;background:#ece8d6;box-shadow:inset 1px 1px 0 #fbfaf4, inset -1px -1px 0 #8d8a80"></div>
<div style="position:absolute;left:16.00px;top:542.50px;width:14.10px;height:13.60px;background:#ece8d6;box-shadow:inset 1px 1px 0 #fbfaf4, inset -1px -1px 0 #8d8a80"></div>
<div style="position:absolute;left:16.00px;top:556.10px;width:14.10px;height:13.60px;background:#ece8d6;box-shadow:inset 1px 1px 0 #fbfaf4, inset -1px -1px 0 #8d8a80"></div>
<div style="position:absolute;left:16.00px;top:569.70px;width:14.10px;height:13.60px;background:#ece8d6;box-shadow:inset 1px 1px 0 #fbfaf4, inset -1px -1px 0 #8d8a80"></div>
<div style="position:absolute;left:16.00px;top:583.30px;width:14.10px;height:13.60px;background:#ece8d6;box-shadow:inset 1px 1px 0 #fbfaf4, inset -1px -1px 0 #8d8a80"></div>
<div style="position:absolute;left:30.10px;top:527.90px;width:31.70px;height:14.60px;background:#ece8d6;box-shadow:inset 1px 1px 0 #fbfaf4, inset -1px -1px 0 #8d8a80"></div>
<div style="position:absolute;left:30.10px;top:542.50px;width:31.70px;height:13.60px;background:#e2f8f8;box-shadow:inset -1px -1px 0 #c4c2bc"></div>
<div style="position:absolute;left:30.10px;top:556.10px;width:31.70px;height:13.60px;background:#e2f8f8;box-shadow:inset -1px -1px 0 #c4c2bc"></div>
<div style="position:absolute;left:30.10px;top:569.70px;width:31.70px;height:13.60px;background:#e2f8f8;box-shadow:inset -1px -1px 0 #c4c2bc"></div>
<div style="position:absolute;left:30.10px;top:583.30px;width:31.70px;height:13.60px;background:#e2f8f8;box-shadow:inset -1px -1px 0 #c4c2bc"></div>
<div style="position:absolute;left:61.80px;top:527.90px;width:42.10px;height:14.60px;background:#ece8d6;box-shadow:inset 1px 1px 0 #fbfaf4, inset -1px -1px 0 #8d8a80"></div>
<div style="position:absolute;left:61.80px;top:542.50px;width:42.10px;height:13.60px;background:#e6e6f8;box-shadow:inset -1px -1px 0 #c4c2bc"></div>
<div style="position:absolute;left:61.80px;top:556.10px;width:42.10px;height:13.60px;background:#e6e6f8;box-shadow:inset -1px -1px 0 #c4c2bc"></div>
<div style="position:absolute;left:61.80px;top:569.70px;width:42.10px;height:13.60px;background:#e6e6f8;box-shadow:inset -1px -1px 0 #c4c2bc"></div>
<div style="position:absolute;left:61.80px;top:583.30px;width:42.10px;height:13.60px;background:#e6e6f8;box-shadow:inset -1px -1px 0 #c4c2bc"></div>
<div style="position:absolute;left:103.90px;top:527.90px;width:43.00px;height:14.60px;background:#ece8d6;box-shadow:inset 1px 1px 0 #fbfaf4, inset -1px -1px 0 #8d8a80"></div>
<div style="position:absolute;left:103.90px;top:542.50px;width:43.00px;height:13.60px;background:#e6e6f8;box-shadow:inset -1px -1px 0 #c4c2bc"></div>
<div style="position:absolute;left:103.90px;top:556.10px;width:43.00px;height:13.60px;background:#e6e6f8;box-shadow:inset -1px -1px 0 #c4c2bc"></div>
<div style="position:absolute;left:103.90px;top:569.70px;width:43.00px;height:13.60px;background:#e6e6f8;box-shadow:inset -1px -1px 0 #c4c2bc"></div>
<div style="position:absolute;left:103.90px;top:583.30px;width:43.00px;height:13.60px;background:#e6e6f8;box-shadow:inset -1px -1px 0 #c4c2bc"></div>
<div style="position:absolute;left:146.90px;top:527.90px;width:43.30px;height:14.60px;background:#ece8d6;box-shadow:inset 1px 1px 0 #fbfaf4, inset -1px -1px 0 #8d8a80"></div>
<div style="position:absolute;left:146.90px;top:542.50px;width:43.30px;height:13.60px;background:#e6e6f8;box-shadow:inset -1px -1px 0 #c4c2bc"></div>
<div style="position:absolute;left:146.90px;top:556.10px;width:43.30px;height:13.60px;background:#e6e6f8;box-shadow:inset -1px -1px 0 #c4c2bc"></div>
<div style="position:absolute;left:146.90px;top:569.70px;width:43.30px;height:13.60px;background:#e6e6f8;box-shadow:inset -1px -1px 0 #c4c2bc"></div>
<div style="position:absolute;left:146.90px;top:583.30px;width:43.30px;height:13.60px;background:#e6e6f8;box-shadow:inset -1px -1px 0 #c4c2bc"></div>
<div style="position:absolute;left:190.20px;top:527.90px;width:41.90px;height:14.60px;background:#ece8d6;box-shadow:inset 1px 1px 0 #fbfaf4, inset -1px -1px 0 #8d8a80"></div>
<div style="position:absolute;left:190.20px;top:542.50px;width:41.90px;height:13.60px;background:#e6e6f8;box-shadow:inset -1px -1px 0 #c4c2bc"></div>
<div style="position:absolute;left:190.20px;top:556.10px;width:41.90px;height:13.60px;background:#e6e6f8;box-shadow:inset -1px -1px 0 #c4c2bc"></div>
<div style="position:absolute;left:190.20px;top:569.70px;width:41.90px;height:13.60px;background:#e6e6f8;box-shadow:inset -1px -1px 0 #c4c2bc"></div>
<div style="position:absolute;left:190.20px;top:583.30px;width:41.90px;height:13.60px;background:#e6e6f8;box-shadow:inset -1px -1px 0 #c4c2bc"></div>
<div style="position:absolute;left:232.10px;top:527.90px;width:63.80px;height:14.60px;background:#ece8d6;box-shadow:inset 1px 1px 0 #fbfaf4, inset -1px -1px 0 #8d8a80"></div>
<div style="position:absolute;left:232.10px;top:542.50px;width:63.80px;height:13.60px;background:#eefcfc;box-shadow:inset -1px -1px 0 #c4c2bc"></div>
<div style="position:absolute;left:232.10px;top:556.10px;width:63.80px;height:13.60px;background:#eefcfc;box-shadow:inset -1px -1px 0 #c4c2bc"></div>
<div style="position:absolute;left:232.10px;top:569.70px;width:63.80px;height:13.60px;background:#eefcfc;box-shadow:inset -1px -1px 0 #c4c2bc"></div>
<div style="position:absolute;left:232.10px;top:583.30px;width:63.80px;height:13.60px;background:#eefcfc;box-shadow:inset -1px -1px 0 #c4c2bc"></div>
<div style="position:absolute;left:295.90px;top:527.90px;width:64.30px;height:14.60px;background:#ece8d6;box-shadow:inset 1px 1px 0 #fbfaf4, inset -1px -1px 0 #8d8a80"></div>
<div style="position:absolute;left:295.90px;top:542.50px;width:64.30px;height:13.60px;background:#eefcfc;box-shadow:inset -1px -1px 0 #c4c2bc"></div>
<div style="position:absolute;left:295.90px;top:556.10px;width:64.30px;height:13.60px;background:#eefcfc;box-shadow:inset -1px -1px 0 #c4c2bc"></div>
<div style="position:absolute;left:295.90px;top:569.70px;width:64.30px;height:13.60px;background:#eefcfc;box-shadow:inset -1px -1px 0 #c4c2bc"></div>
<div style="position:absolute;left:295.90px;top:583.30px;width:64.30px;height:13.60px;background:#eefcfc;box-shadow:inset -1px -1px 0 #c4c2bc"></div>
<div style="position:absolute;left:360.20px;top:527.90px;width:20.00px;height:14.60px;background:#ece8d6;box-shadow:inset 1px 1px 0 #fbfaf4, inset -1px -1px 0 #8d8a80"></div>
<div style="position:absolute;left:360.20px;top:542.50px;width:20.00px;height:13.60px;background:#f4f3ec;box-shadow:inset -1px -1px 0 #c4c2bc"></div>
<div style="position:absolute;left:360.20px;top:556.10px;width:20.00px;height:13.60px;background:#f4f3ec;box-shadow:inset -1px -1px 0 #c4c2bc"></div>
<div style="position:absolute;left:360.20px;top:569.70px;width:20.00px;height:13.60px;background:#f4f3ec;box-shadow:inset -1px -1px 0 #c4c2bc"></div>
<div style="position:absolute;left:360.20px;top:583.30px;width:20.00px;height:13.60px;background:#f4f3ec;box-shadow:inset -1px -1px 0 #c4c2bc"></div>
<div style="position:absolute;left:380.20px;top:527.90px;width:42.70px;height:14.60px;background:#ece8d6;box-shadow:inset 1px 1px 0 #fbfaf4, inset -1px -1px 0 #8d8a80"></div>
<div style="position:absolute;left:380.20px;top:542.50px;width:42.70px;height:13.60px;background:#e8fbe8;box-shadow:inset -1px -1px 0 #c4c2bc"></div>
<div style="position:absolute;left:380.20px;top:556.10px;width:42.70px;height:13.60px;background:#e8fbe8;box-shadow:inset -1px -1px 0 #c4c2bc"></div>
<div style="position:absolute;left:380.20px;top:569.70px;width:42.70px;height:13.60px;background:#e8fbe8;box-shadow:inset -1px -1px 0 #c4c2bc"></div>
<div style="position:absolute;left:380.20px;top:583.30px;width:42.70px;height:13.60px;background:#e8fbe8;box-shadow:inset -1px -1px 0 #c4c2bc"></div>
<div style="position:absolute;left:422.90px;top:527.90px;width:42.90px;height:14.60px;background:#ece8d6;box-shadow:inset 1px 1px 0 #fbfaf4, inset -1px -1px 0 #8d8a80"></div>
<div style="position:absolute;left:422.90px;top:542.50px;width:42.90px;height:13.60px;background:#e8fbe8;box-shadow:inset -1px -1px 0 #c4c2bc"></div>
<div style="position:absolute;left:422.90px;top:556.10px;width:42.90px;height:13.60px;background:#e8fbe8;box-shadow:inset -1px -1px 0 #c4c2bc"></div>
<div style="position:absolute;left:422.90px;top:569.70px;width:42.90px;height:13.60px;background:#e8fbe8;box-shadow:inset -1px -1px 0 #c4c2bc"></div>
<div style="position:absolute;left:422.90px;top:583.30px;width:42.90px;height:13.60px;background:#e8fbe8;box-shadow:inset -1px -1px 0 #c4c2bc"></div>
<div style="position:absolute;left:465.80px;top:527.90px;width:42.50px;height:14.60px;background:#ece8d6;box-shadow:inset 1px 1px 0 #fbfaf4, inset -1px -1px 0 #8d8a80"></div>
<div style="position:absolute;left:465.80px;top:542.50px;width:42.50px;height:13.60px;background:#eefcfc;box-shadow:inset -1px -1px 0 #c4c2bc"></div>
<div style="position:absolute;left:465.80px;top:556.10px;width:42.50px;height:13.60px;background:#eefcfc;box-shadow:inset -1px -1px 0 #c4c2bc"></div>
<div style="position:absolute;left:465.80px;top:569.70px;width:42.50px;height:13.60px;background:#eefcfc;box-shadow:inset -1px -1px 0 #c4c2bc"></div>
<div style="position:absolute;left:465.80px;top:583.30px;width:42.50px;height:13.60px;background:#eefcfc;box-shadow:inset -1px -1px 0 #c4c2bc"></div>
<div style="position:absolute;left:-104.05px;width:300px;text-align:center;top:529.60px;font-size:11.1px;line-height:11.1px;color:#000;font-weight:normal;white-space:nowrap;letter-spacing:-0.28px;">pal</div>
<div style="position:absolute;left:-198.10px;width:300px;text-align:right;top:529.60px;font-size:11.1px;line-height:11.1px;color:#000;font-weight:normal;white-space:nowrap;letter-spacing:-0.28px;">x</div>
<div style="position:absolute;left:-155.10px;width:300px;text-align:right;top:529.60px;font-size:11.1px;line-height:11.1px;color:#000;font-weight:normal;white-space:nowrap;letter-spacing:-0.28px;">y</div>
<div style="position:absolute;left:-111.80px;width:300px;text-align:right;top:529.60px;font-size:11.1px;line-height:11.1px;color:#000;font-weight:normal;white-space:nowrap;letter-spacing:-0.28px;">d</div>
<div style="position:absolute;left:-69.90px;width:300px;text-align:right;top:529.60px;font-size:11.1px;line-height:11.1px;color:#000;font-weight:normal;white-space:nowrap;letter-spacing:-0.28px;">l</div>
<div style="position:absolute;left:-6.10px;width:300px;text-align:right;top:529.60px;font-size:11.1px;line-height:11.1px;color:#000;font-weight:normal;white-space:nowrap;letter-spacing:-0.28px;">cls</div>
<div style="position:absolute;left:58.20px;width:300px;text-align:right;top:529.60px;font-size:11.1px;line-height:11.1px;color:#000;font-weight:normal;white-space:nowrap;letter-spacing:-0.28px;">fer</div>
<div style="position:absolute;left:220.20px;width:300px;text-align:center;top:529.60px;font-size:11.1px;line-height:11.1px;color:#000;font-weight:normal;white-space:nowrap;letter-spacing:-0.28px;"><span style="font-size:9.5px;position:relative;top:-2.5px;color:#333">*</span></div>
<div style="position:absolute;left:120.90px;width:300px;text-align:right;top:529.60px;font-size:11.1px;line-height:11.1px;color:#000;font-weight:normal;white-space:nowrap;letter-spacing:-0.28px;">Qd+</div>
<div style="position:absolute;left:163.80px;width:300px;text-align:right;top:529.60px;font-size:11.1px;line-height:11.1px;color:#000;font-weight:normal;white-space:nowrap;letter-spacing:-0.28px;">Qd-</div>
<div style="position:absolute;left:469.40px;top:529.60px;font-size:11.1px;line-height:11.1px;color:#000;font-weight:normal;white-space:nowrap;letter-spacing:-0.28px;">pqp</div>
<div style="position:absolute;left:-104.05px;width:300px;text-align:center;top:543.70px;font-size:11.1px;line-height:11.1px;color:#000;font-weight:normal;white-space:nowrap;letter-spacing:-0.28px;">1</div>
<div style="position:absolute;left:-196.90px;width:300px;text-align:right;top:543.70px;font-size:11.1px;line-height:11.1px;color:#000;font-weight:normal;white-space:nowrap;letter-spacing:-0.28px;">50,0</div>
<div style="position:absolute;left:-153.90px;width:300px;text-align:right;top:543.70px;font-size:11.1px;line-height:11.1px;color:#000;font-weight:normal;white-space:nowrap;letter-spacing:-0.28px;">20,0</div>
<div style="position:absolute;left:-110.60px;width:300px;text-align:right;top:543.70px;font-size:11.1px;line-height:11.1px;color:#000;font-weight:normal;white-space:nowrap;letter-spacing:-0.28px;">80</div>
<div style="position:absolute;left:-68.70px;width:300px;text-align:right;top:543.70px;font-size:11.1px;line-height:11.1px;color:#000;font-weight:normal;white-space:nowrap;letter-spacing:-0.28px;">2000</div>
<div style="position:absolute;left:-18.70px;width:300px;text-align:right;top:543.70px;font-size:11.1px;line-height:11.1px;color:#000;font-weight:normal;white-space:nowrap;letter-spacing:-0.28px;">Rck250</div>
<div style="position:absolute;left:45.60px;width:300px;text-align:right;top:543.70px;font-size:11.1px;line-height:11.1px;color:#000;font-weight:normal;white-space:nowrap;letter-spacing:-0.28px;">FeB44K</div>
<div style="position:absolute;left:220.20px;width:300px;text-align:center;top:543.70px;font-size:11.1px;line-height:11.1px;color:#000;font-weight:normal;white-space:nowrap;letter-spacing:-0.28px;"></div>
<div style="position:absolute;left:122.10px;width:300px;text-align:right;top:543.70px;font-size:11.1px;line-height:11.1px;color:#000;font-weight:normal;white-space:nowrap;letter-spacing:-0.28px;"></div>
<div style="position:absolute;left:165.00px;width:300px;text-align:right;top:543.70px;font-size:11.1px;line-height:11.1px;color:#000;font-weight:normal;white-space:nowrap;letter-spacing:-0.28px;"></div>
<div style="position:absolute;left:469.40px;top:543.70px;font-size:11.1px;line-height:11.1px;color:#000;font-weight:normal;white-space:nowrap;letter-spacing:-0.28px;">8H</div>
<div style="position:absolute;left:281.90px;top:543.50px;width:12.00px;height:11.10px;background:rgba(236,233,216,0.55)"></div>
<svg style="position:absolute;left:284.90px;top:549.40px" width="6" height="3"><path d="M0 0 H6 L3 3 Z" fill="#000"/></svg>
<div style="position:absolute;left:346.20px;top:543.50px;width:12.00px;height:11.10px;background:rgba(236,233,216,0.55)"></div>
<svg style="position:absolute;left:349.20px;top:549.40px" width="6" height="3"><path d="M0 0 H6 L3 3 Z" fill="#000"/></svg>
<div style="position:absolute;left:494.30px;top:543.50px;width:12.00px;height:11.10px;background:rgba(236,233,216,0.55)"></div>
<svg style="position:absolute;left:497.30px;top:549.40px" width="6" height="3"><path d="M0 0 H6 L3 3 Z" fill="#000"/></svg>
<div style="position:absolute;left:363.60px;top:543.70px;width:11.00px;height:11.00px;background:#fbfbf6;box-shadow:inset 1.7px 1.7px 0 #8e8c84"></div>
<div style="position:absolute;left:-104.05px;width:300px;text-align:center;top:557.30px;font-size:11.1px;line-height:11.1px;color:#000;font-weight:normal;white-space:nowrap;letter-spacing:-0.28px;">2</div>
<div style="position:absolute;left:-196.90px;width:300px;text-align:right;top:557.30px;font-size:11.1px;line-height:11.1px;color:#000;font-weight:normal;white-space:nowrap;letter-spacing:-0.28px;">450,0</div>
<div style="position:absolute;left:-153.90px;width:300px;text-align:right;top:557.30px;font-size:11.1px;line-height:11.1px;color:#000;font-weight:normal;white-space:nowrap;letter-spacing:-0.28px;">20,0</div>
<div style="position:absolute;left:-110.60px;width:300px;text-align:right;top:557.30px;font-size:11.1px;line-height:11.1px;color:#000;font-weight:normal;white-space:nowrap;letter-spacing:-0.28px;">80</div>
<div style="position:absolute;left:-68.70px;width:300px;text-align:right;top:557.30px;font-size:11.1px;line-height:11.1px;color:#000;font-weight:normal;white-space:nowrap;letter-spacing:-0.28px;">2000</div>
<div style="position:absolute;left:-18.70px;width:300px;text-align:right;top:557.30px;font-size:11.1px;line-height:11.1px;color:#000;font-weight:normal;white-space:nowrap;letter-spacing:-0.28px;">Rck250</div>
<div style="position:absolute;left:45.60px;width:300px;text-align:right;top:557.30px;font-size:11.1px;line-height:11.1px;color:#000;font-weight:normal;white-space:nowrap;letter-spacing:-0.28px;">FeB44K</div>
<div style="position:absolute;left:220.20px;width:300px;text-align:center;top:557.30px;font-size:11.1px;line-height:11.1px;color:#000;font-weight:normal;white-space:nowrap;letter-spacing:-0.28px;"></div>
<div style="position:absolute;left:122.10px;width:300px;text-align:right;top:557.30px;font-size:11.1px;line-height:11.1px;color:#000;font-weight:normal;white-space:nowrap;letter-spacing:-0.28px;"></div>
<div style="position:absolute;left:165.00px;width:300px;text-align:right;top:557.30px;font-size:11.1px;line-height:11.1px;color:#000;font-weight:normal;white-space:nowrap;letter-spacing:-0.28px;"></div>
<div style="position:absolute;left:469.40px;top:557.30px;font-size:11.1px;line-height:11.1px;color:#000;font-weight:normal;white-space:nowrap;letter-spacing:-0.28px;">8H</div>
<div style="position:absolute;left:281.90px;top:557.10px;width:12.00px;height:11.10px;background:rgba(236,233,216,0.55)"></div>
<svg style="position:absolute;left:284.90px;top:563.00px" width="6" height="3"><path d="M0 0 H6 L3 3 Z" fill="#000"/></svg>
<div style="position:absolute;left:346.20px;top:557.10px;width:12.00px;height:11.10px;background:rgba(236,233,216,0.55)"></div>
<svg style="position:absolute;left:349.20px;top:563.00px" width="6" height="3"><path d="M0 0 H6 L3 3 Z" fill="#000"/></svg>
<div style="position:absolute;left:494.30px;top:557.10px;width:12.00px;height:11.10px;background:rgba(236,233,216,0.55)"></div>
<svg style="position:absolute;left:497.30px;top:563.00px" width="6" height="3"><path d="M0 0 H6 L3 3 Z" fill="#000"/></svg>
<div style="position:absolute;left:363.60px;top:557.30px;width:11.00px;height:11.00px;background:#fbfbf6;box-shadow:inset 1.7px 1.7px 0 #8e8c84"></div>
<div style="position:absolute;left:-104.05px;width:300px;text-align:center;top:570.90px;font-size:11.1px;line-height:11.1px;color:#000;font-weight:normal;white-space:nowrap;letter-spacing:-0.28px;">3</div>
<div style="position:absolute;left:-196.90px;width:300px;text-align:right;top:570.90px;font-size:11.1px;line-height:11.1px;color:#000;font-weight:normal;white-space:nowrap;letter-spacing:-0.28px;">50,0</div>
<div style="position:absolute;left:-153.90px;width:300px;text-align:right;top:570.90px;font-size:11.1px;line-height:11.1px;color:#000;font-weight:normal;white-space:nowrap;letter-spacing:-0.28px;">380,0</div>
<div style="position:absolute;left:-110.60px;width:300px;text-align:right;top:570.90px;font-size:11.1px;line-height:11.1px;color:#000;font-weight:normal;white-space:nowrap;letter-spacing:-0.28px;">80</div>
<div style="position:absolute;left:-68.70px;width:300px;text-align:right;top:570.90px;font-size:11.1px;line-height:11.1px;color:#000;font-weight:normal;white-space:nowrap;letter-spacing:-0.28px;">2000</div>
<div style="position:absolute;left:-18.70px;width:300px;text-align:right;top:570.90px;font-size:11.1px;line-height:11.1px;color:#000;font-weight:normal;white-space:nowrap;letter-spacing:-0.28px;">Rck250</div>
<div style="position:absolute;left:45.60px;width:300px;text-align:right;top:570.90px;font-size:11.1px;line-height:11.1px;color:#000;font-weight:normal;white-space:nowrap;letter-spacing:-0.28px;">FeB44K</div>
<div style="position:absolute;left:220.20px;width:300px;text-align:center;top:570.90px;font-size:11.1px;line-height:11.1px;color:#000;font-weight:normal;white-space:nowrap;letter-spacing:-0.28px;"></div>
<div style="position:absolute;left:122.10px;width:300px;text-align:right;top:570.90px;font-size:11.1px;line-height:11.1px;color:#000;font-weight:normal;white-space:nowrap;letter-spacing:-0.28px;"></div>
<div style="position:absolute;left:165.00px;width:300px;text-align:right;top:570.90px;font-size:11.1px;line-height:11.1px;color:#000;font-weight:normal;white-space:nowrap;letter-spacing:-0.28px;"></div>
<div style="position:absolute;left:469.40px;top:570.90px;font-size:11.1px;line-height:11.1px;color:#000;font-weight:normal;white-space:nowrap;letter-spacing:-0.28px;">8H</div>
<div style="position:absolute;left:281.90px;top:570.70px;width:12.00px;height:11.10px;background:rgba(236,233,216,0.55)"></div>
<svg style="position:absolute;left:284.90px;top:576.60px" width="6" height="3"><path d="M0 0 H6 L3 3 Z" fill="#000"/></svg>
<div style="position:absolute;left:346.20px;top:570.70px;width:12.00px;height:11.10px;background:rgba(236,233,216,0.55)"></div>
<svg style="position:absolute;left:349.20px;top:576.60px" width="6" height="3"><path d="M0 0 H6 L3 3 Z" fill="#000"/></svg>
<div style="position:absolute;left:494.30px;top:570.70px;width:12.00px;height:11.10px;background:rgba(236,233,216,0.55)"></div>
<svg style="position:absolute;left:497.30px;top:576.60px" width="6" height="3"><path d="M0 0 H6 L3 3 Z" fill="#000"/></svg>
<div style="position:absolute;left:363.60px;top:570.90px;width:11.00px;height:11.00px;background:#fbfbf6;box-shadow:inset 1.7px 1.7px 0 #8e8c84"></div>
<div style="position:absolute;left:-104.05px;width:300px;text-align:center;top:584.50px;font-size:11.1px;line-height:11.1px;color:#000;font-weight:normal;white-space:nowrap;letter-spacing:-0.28px;">4</div>
<div style="position:absolute;left:-196.90px;width:300px;text-align:right;top:584.50px;font-size:11.1px;line-height:11.1px;color:#000;font-weight:normal;white-space:nowrap;letter-spacing:-0.28px;">450,0</div>
<div style="position:absolute;left:-153.90px;width:300px;text-align:right;top:584.50px;font-size:11.1px;line-height:11.1px;color:#000;font-weight:normal;white-space:nowrap;letter-spacing:-0.28px;">380,0</div>
<div style="position:absolute;left:-110.60px;width:300px;text-align:right;top:584.50px;font-size:11.1px;line-height:11.1px;color:#000;font-weight:normal;white-space:nowrap;letter-spacing:-0.28px;">80</div>
<div style="position:absolute;left:-68.70px;width:300px;text-align:right;top:584.50px;font-size:11.1px;line-height:11.1px;color:#000;font-weight:normal;white-space:nowrap;letter-spacing:-0.28px;">2000</div>
<div style="position:absolute;left:-18.70px;width:300px;text-align:right;top:584.50px;font-size:11.1px;line-height:11.1px;color:#000;font-weight:normal;white-space:nowrap;letter-spacing:-0.28px;">Rck250</div>
<div style="position:absolute;left:45.60px;width:300px;text-align:right;top:584.50px;font-size:11.1px;line-height:11.1px;color:#000;font-weight:normal;white-space:nowrap;letter-spacing:-0.28px;">FeB44K</div>
<div style="position:absolute;left:220.20px;width:300px;text-align:center;top:584.50px;font-size:11.1px;line-height:11.1px;color:#000;font-weight:normal;white-space:nowrap;letter-spacing:-0.28px;"></div>
<div style="position:absolute;left:122.10px;width:300px;text-align:right;top:584.50px;font-size:11.1px;line-height:11.1px;color:#000;font-weight:normal;white-space:nowrap;letter-spacing:-0.28px;"></div>
<div style="position:absolute;left:165.00px;width:300px;text-align:right;top:584.50px;font-size:11.1px;line-height:11.1px;color:#000;font-weight:normal;white-space:nowrap;letter-spacing:-0.28px;"></div>
<div style="position:absolute;left:469.40px;top:584.50px;font-size:11.1px;line-height:11.1px;color:#000;font-weight:normal;white-space:nowrap;letter-spacing:-0.28px;">8H</div>
<div style="position:absolute;left:281.90px;top:584.30px;width:12.00px;height:11.10px;background:rgba(236,233,216,0.55)"></div>
<svg style="position:absolute;left:284.90px;top:590.20px" width="6" height="3"><path d="M0 0 H6 L3 3 Z" fill="#000"/></svg>
<div style="position:absolute;left:346.20px;top:584.30px;width:12.00px;height:11.10px;background:rgba(236,233,216,0.55)"></div>
<svg style="position:absolute;left:349.20px;top:590.20px" width="6" height="3"><path d="M0 0 H6 L3 3 Z" fill="#000"/></svg>
<div style="position:absolute;left:494.30px;top:584.30px;width:12.00px;height:11.10px;background:rgba(236,233,216,0.55)"></div>
<svg style="position:absolute;left:497.30px;top:590.20px" width="6" height="3"><path d="M0 0 H6 L3 3 Z" fill="#000"/></svg>
<div style="position:absolute;left:363.60px;top:584.50px;width:11.00px;height:11.00px;background:#fbfbf6;box-shadow:inset 1.7px 1.7px 0 #8e8c84"></div>
<svg style="position:absolute;left:20.70px;top:585.50px" width="7" height="10.5"><path d="M0 0 L6.2 5.25 L0 10.5 Z" fill="#000"/></svg>
<div style="position:absolute;left:14.00px;top:603.00px;width:447.50px;height:77.00px;background:#0a4ad8;border-radius:7px 7px 0 0;overflow:hidden">
<div style="position:absolute;left:0;top:0;width:447.50px;height:29.2px;background:linear-gradient(#0a2e9a 0px,#3a84fa 1px,#2a78f8 2.5px,#065cf0 5px,#0056ee 14px,#0458f0 22px,#1666f6 25.2px,#0a4ed8 27.2px,#0842c0 29.2px)"></div>
<div style="position:absolute;left:0;top:6px;width:1.3px;height:71.00px;background:#0832a8"></div>
<div style="position:absolute;right:0;top:6px;width:1.3px;height:71.00px;background:#0832a8"></div>
<div style="position:absolute;left:0;bottom:0;width:447.50px;height:1.3px;background:#0832a8"></div>
<div style="position:absolute;left:5.30px;top:29.20px;width:438.70px;height:44.80px;background:#fff"></div>
</div>
<svg style="position:absolute;left:19.00px;top:610.00px" width="16" height="15" viewBox="0 0 16 15"><path d="M6.3 6.5 V2.2 Q6.3 1.2 7.5 1.2 L10.5 2.4" stroke="#0e2a78" stroke-width="1.7" fill="none"/><path d="M7.2 3 V6.5" stroke="#7ab8f0" stroke-width="0.9"/><path d="M0.3 6.3 H15.7 L15 9 H1 Z" fill="#08104e"/><rect x="1" y="9" width="14" height="5" fill="#0c2850"/><rect x="3" y="10.2" width="9.5" height="2.2" fill="#e8eef0"/><rect x="6" y="10.2" width="4" height="2.2" fill="#e07888"/></svg>
<div style="position:absolute;left:38.50px;top:612.50px;font-size:13px;line-height:13px;color:#ffffff;font-weight:bold;white-space:nowrap;">Direzioni di armatura e verifica nel plinto</div>
<div style="position:absolute;left:436.00px;top:608.30px;width:17.60px;height:17.60px;border:1.2px solid #ffffff;border-radius:3px;background:linear-gradient(135deg,#e9826a,#d8573c 50%,#c94a30)"><svg width="17.60" height="17.60" style="position:absolute;left:0;top:0"><path d="M4.6 4.4 L13.00 12.80 M13.00 4.4 L4.6 12.80" stroke="#fff" stroke-width="2.1" stroke-linecap="round"/></svg></div>
<div style="position:absolute;left:19.30px;top:632.90px;width:14.60px;height:15.00px;background:#ece8d6;box-shadow:inset 1px 1px 0 #fbfaf4, inset -1px -1px 0 #8d8a80"></div>
<div style="position:absolute;left:19.30px;top:647.90px;width:14.60px;height:13.60px;background:#ece8d6;box-shadow:inset 1px 1px 0 #fbfaf4, inset -1px -1px 0 #8d8a80"></div>
<div style="position:absolute;left:19.30px;top:661.50px;width:14.60px;height:13.60px;background:#ece8d6;box-shadow:inset 1px 1px 0 #fbfaf4, inset -1px -1px 0 #8d8a80"></div>
<div style="position:absolute;left:33.90px;top:632.90px;width:31.40px;height:15.00px;background:#ece8d6;box-shadow:inset 1px 1px 0 #fbfaf4, inset -1px -1px 0 #8d8a80"></div>
<div style="position:absolute;left:33.90px;top:647.90px;width:31.40px;height:13.60px;background:#e2f8f8;box-shadow:inset -1px -1px 0 #c4c2bc"></div>
<div style="position:absolute;left:33.90px;top:661.50px;width:31.40px;height:13.60px;background:#e2f8f8;box-shadow:inset -1px -1px 0 #c4c2bc"></div>
<div style="position:absolute;left:65.30px;top:632.90px;width:53.20px;height:15.00px;background:#ece8d6;box-shadow:inset 1px 1px 0 #fbfaf4, inset -1px -1px 0 #8d8a80"></div>
<div style="position:absolute;left:65.30px;top:647.90px;width:53.20px;height:13.60px;background:#f0efe8;box-shadow:inset -1px -1px 0 #c4c2bc"></div>
<div style="position:absolute;left:65.30px;top:661.50px;width:53.20px;height:13.60px;background:#f0efe8;box-shadow:inset -1px -1px 0 #c4c2bc"></div>
<div style="position:absolute;left:118.50px;top:632.90px;width:43.00px;height:15.00px;background:#ece8d6;box-shadow:inset 1px 1px 0 #fbfaf4, inset -1px -1px 0 #8d8a80"></div>
<div style="position:absolute;left:118.50px;top:647.90px;width:43.00px;height:13.60px;background:#e6e6f8;box-shadow:inset -1px -1px 0 #c4c2bc"></div>
<div style="position:absolute;left:118.50px;top:661.50px;width:43.00px;height:13.60px;background:#e6e6f8;box-shadow:inset -1px -1px 0 #c4c2bc"></div>
<div style="position:absolute;left:161.50px;top:632.90px;width:42.30px;height:15.00px;background:#ece8d6;box-shadow:inset 1px 1px 0 #fbfaf4, inset -1px -1px 0 #8d8a80"></div>
<div style="position:absolute;left:161.50px;top:647.90px;width:42.30px;height:13.60px;background:#e6e6f8;box-shadow:inset -1px -1px 0 #c4c2bc"></div>
<div style="position:absolute;left:161.50px;top:661.50px;width:42.30px;height:13.60px;background:#e6e6f8;box-shadow:inset -1px -1px 0 #c4c2bc"></div>
<div style="position:absolute;left:203.80px;top:632.90px;width:43.70px;height:15.00px;background:#ece8d6;box-shadow:inset 1px 1px 0 #fbfaf4, inset -1px -1px 0 #8d8a80"></div>
<div style="position:absolute;left:203.80px;top:647.90px;width:43.70px;height:13.60px;background:#e6e6f8;box-shadow:inset -1px -1px 0 #c4c2bc"></div>
<div style="position:absolute;left:203.80px;top:661.50px;width:43.70px;height:13.60px;background:#e6e6f8;box-shadow:inset -1px -1px 0 #c4c2bc"></div>
<div style="position:absolute;left:247.50px;top:632.90px;width:40.70px;height:15.00px;background:#ece8d6;box-shadow:inset 1px 1px 0 #fbfaf4, inset -1px -1px 0 #8d8a80"></div>
<div style="position:absolute;left:247.50px;top:647.90px;width:40.70px;height:13.60px;background:#e6e6f8;box-shadow:inset -1px -1px 0 #c4c2bc"></div>
<div style="position:absolute;left:247.50px;top:661.50px;width:40.70px;height:13.60px;background:#e6e6f8;box-shadow:inset -1px -1px 0 #c4c2bc"></div>
<div style="position:absolute;left:288.20px;top:632.90px;width:64.50px;height:15.00px;background:#ece8d6;box-shadow:inset 1px 1px 0 #fbfaf4, inset -1px -1px 0 #8d8a80"></div>
<div style="position:absolute;left:288.20px;top:647.90px;width:64.50px;height:13.60px;background:#eefcfc;box-shadow:inset -1px -1px 0 #c4c2bc"></div>
<div style="position:absolute;left:288.20px;top:661.50px;width:64.50px;height:13.60px;background:#eefcfc;box-shadow:inset -1px -1px 0 #c4c2bc"></div>
<div style="position:absolute;left:352.70px;top:632.90px;width:63.60px;height:15.00px;background:#ece8d6;box-shadow:inset 1px 1px 0 #fbfaf4, inset -1px -1px 0 #8d8a80"></div>
<div style="position:absolute;left:352.70px;top:647.90px;width:63.60px;height:13.60px;background:#eefcfc;box-shadow:inset -1px -1px 0 #c4c2bc"></div>
<div style="position:absolute;left:352.70px;top:661.50px;width:63.60px;height:13.60px;background:#eefcfc;box-shadow:inset -1px -1px 0 #c4c2bc"></div>
<div style="position:absolute;left:416.30px;top:632.90px;width:39.00px;height:15.00px;background:#ece8d6;box-shadow:inset 1px 1px 0 #fbfaf4, inset -1px -1px 0 #8d8a80"></div>
<div style="position:absolute;left:416.30px;top:647.90px;width:39.00px;height:13.60px;background:#f4f3ec;box-shadow:inset -1px -1px 0 #c4c2bc"></div>
<div style="position:absolute;left:416.30px;top:661.50px;width:39.00px;height:13.60px;background:#f4f3ec;box-shadow:inset -1px -1px 0 #c4c2bc"></div>
<div style="position:absolute;left:-100.40px;width:300px;text-align:center;top:634.60px;font-size:11.1px;line-height:11.1px;color:#000;font-weight:normal;white-space:nowrap;letter-spacing:-0.28px;">dir</div>
<div style="position:absolute;left:68.90px;top:634.60px;font-size:11.1px;line-height:11.1px;color:#000;font-weight:normal;white-space:nowrap;letter-spacing:-0.28px;">nome</div>
<div style="position:absolute;left:-140.50px;width:300px;text-align:right;top:634.60px;font-size:11.1px;line-height:11.1px;color:#000;font-weight:normal;white-space:nowrap;letter-spacing:-0.28px;">x1</div>
<div style="position:absolute;left:-98.20px;width:300px;text-align:right;top:634.60px;font-size:11.1px;line-height:11.1px;color:#000;font-weight:normal;white-space:nowrap;letter-spacing:-0.28px;">y1</div>
<div style="position:absolute;left:-54.50px;width:300px;text-align:right;top:634.60px;font-size:11.1px;line-height:11.1px;color:#000;font-weight:normal;white-space:nowrap;letter-spacing:-0.28px;">x2</div>
<div style="position:absolute;left:-13.80px;width:300px;text-align:right;top:634.60px;font-size:11.1px;line-height:11.1px;color:#000;font-weight:normal;white-space:nowrap;letter-spacing:-0.28px;">y2</div>
<div style="position:absolute;left:291.80px;top:634.60px;font-size:11.1px;line-height:11.1px;color:#000;font-weight:normal;white-space:nowrap;letter-spacing:-0.28px;">verifiche</div>
<div style="position:absolute;left:356.30px;top:634.60px;font-size:11.1px;line-height:11.1px;color:#000;font-weight:normal;white-space:nowrap;letter-spacing:-0.28px;">armature</div>
<div style="position:absolute;left:153.30px;width:300px;text-align:right;top:634.60px;font-size:11.1px;line-height:11.1px;color:#000;font-weight:normal;white-space:nowrap;letter-spacing:-0.28px;">bxa</div>
<div style="position:absolute;left:-100.40px;width:300px;text-align:center;top:649.10px;font-size:11.1px;line-height:11.1px;color:#000;font-weight:normal;white-space:nowrap;letter-spacing:-0.28px;">1</div>
<div style="position:absolute;left:68.90px;top:649.10px;font-size:11.1px;line-height:11.1px;color:#000;font-weight:normal;white-space:nowrap;letter-spacing:-0.28px;">D1</div>
<div style="position:absolute;left:-139.30px;width:300px;text-align:right;top:649.10px;font-size:11.1px;line-height:11.1px;color:#000;font-weight:normal;white-space:nowrap;letter-spacing:-0.28px;">0,0</div>
<div style="position:absolute;left:-97.00px;width:300px;text-align:right;top:649.10px;font-size:11.1px;line-height:11.1px;color:#000;font-weight:normal;white-space:nowrap;letter-spacing:-0.28px;">20,0</div>
<div style="position:absolute;left:-53.30px;width:300px;text-align:right;top:649.10px;font-size:11.1px;line-height:11.1px;color:#000;font-weight:normal;white-space:nowrap;letter-spacing:-0.28px;">500,0</div>
<div style="position:absolute;left:-12.60px;width:300px;text-align:right;top:649.10px;font-size:11.1px;line-height:11.1px;color:#000;font-weight:normal;white-space:nowrap;letter-spacing:-0.28px;">20,0</div>
<div style="position:absolute;left:291.80px;top:649.10px;font-size:11.1px;line-height:11.1px;color:#000;font-weight:normal;white-space:nowrap;letter-spacing:-0.28px;">presenti</div>
<div style="position:absolute;left:356.30px;top:649.10px;font-size:11.1px;line-height:11.1px;color:#000;font-weight:normal;white-space:nowrap;letter-spacing:-0.28px;">diffuse</div>
<div style="position:absolute;left:154.50px;width:300px;text-align:right;top:649.10px;font-size:11.1px;line-height:11.1px;color:#000;font-weight:normal;white-space:nowrap;letter-spacing:-0.28px;"></div>
<div style="position:absolute;left:338.70px;top:648.90px;width:12.00px;height:11.10px;background:rgba(236,233,216,0.55)"></div>
<svg style="position:absolute;left:341.70px;top:654.80px" width="6" height="3"><path d="M0 0 H6 L3 3 Z" fill="#000"/></svg>
<div style="position:absolute;left:402.30px;top:648.90px;width:12.00px;height:11.10px;background:rgba(236,233,216,0.55)"></div>
<svg style="position:absolute;left:405.30px;top:654.80px" width="6" height="3"><path d="M0 0 H6 L3 3 Z" fill="#000"/></svg>
<div style="position:absolute;left:-100.40px;width:300px;text-align:center;top:662.70px;font-size:11.1px;line-height:11.1px;color:#000;font-weight:normal;white-space:nowrap;letter-spacing:-0.28px;">2</div>
<div style="position:absolute;left:68.90px;top:662.70px;font-size:11.1px;line-height:11.1px;color:#000;font-weight:normal;white-space:nowrap;letter-spacing:-0.28px;">D2</div>
<div style="position:absolute;left:-139.30px;width:300px;text-align:right;top:662.70px;font-size:11.1px;line-height:11.1px;color:#000;font-weight:normal;white-space:nowrap;letter-spacing:-0.28px;">50,0</div>
<div style="position:absolute;left:-97.00px;width:300px;text-align:right;top:662.70px;font-size:11.1px;line-height:11.1px;color:#000;font-weight:normal;white-space:nowrap;letter-spacing:-0.28px;">0,0</div>
<div style="position:absolute;left:-53.30px;width:300px;text-align:right;top:662.70px;font-size:11.1px;line-height:11.1px;color:#000;font-weight:normal;white-space:nowrap;letter-spacing:-0.28px;">50,0</div>
<div style="position:absolute;left:-12.60px;width:300px;text-align:right;top:662.70px;font-size:11.1px;line-height:11.1px;color:#000;font-weight:normal;white-space:nowrap;letter-spacing:-0.28px;">400,0</div>
<div style="position:absolute;left:291.80px;top:662.70px;font-size:11.1px;line-height:11.1px;color:#000;font-weight:normal;white-space:nowrap;letter-spacing:-0.28px;">presenti</div>
<div style="position:absolute;left:356.30px;top:662.70px;font-size:11.1px;line-height:11.1px;color:#000;font-weight:normal;white-space:nowrap;letter-spacing:-0.28px;">diffuse</div>
<div style="position:absolute;left:154.50px;width:300px;text-align:right;top:662.70px;font-size:11.1px;line-height:11.1px;color:#000;font-weight:normal;white-space:nowrap;letter-spacing:-0.28px;"></div>
<div style="position:absolute;left:338.70px;top:662.50px;width:12.00px;height:11.10px;background:rgba(236,233,216,0.55)"></div>
<svg style="position:absolute;left:341.70px;top:668.40px" width="6" height="3"><path d="M0 0 H6 L3 3 Z" fill="#000"/></svg>
<div style="position:absolute;left:402.30px;top:662.50px;width:12.00px;height:11.10px;background:rgba(236,233,216,0.55)"></div>
<svg style="position:absolute;left:405.30px;top:668.40px" width="6" height="3"><path d="M0 0 H6 L3 3 Z" fill="#000"/></svg>
<svg style="position:absolute;left:24.00px;top:663.70px" width="7" height="10.5"><path d="M0 0 L6.2 5.25 L0 10.5 Z" fill="#000"/></svg>
<svg style="position:absolute;left:0;top:0" width="830" height="722" viewBox="0 0 830 722"><defs><pattern id="hatch" patternUnits="userSpaceOnUse" width="10" height="10" patternTransform="translate(0,0.5)"><rect width="10" height="10" fill="#e6f6f6"/><path d="M-1 -1 L11 11 M4 -6 L16 6 M-6 4 L6 16" stroke="#9cb8b8" stroke-width="0.9"/><path d="M11 -1 L-1 11 M6 -6 L-6 6 M16 4 L4 16" stroke="#dca8ac" stroke-width="0.9"/></pattern><clipPath id="cv"><rect x="8.5" y="126" width="416" height="343"/></clipPath></defs><g clip-path="url(#cv)"><path d="M119.3 153 V169 M119.3 174.6 V410.9 M119.3 416.8 V432.7" stroke="#c9ad7e" stroke-width="1.1" fill="none"/><path d="M52.8 381.3 H71.1 M75.7 381.3 H360.5 M364.5 381.3 H382.8" stroke="#c9ad7e" stroke-width="1.1" fill="none"/><polygon points="74.85,411.03 360.50,411.03 360.50,174.63 271.85,174.63 271.85,282.98 163.50,282.98 163.50,174.63 74.85,174.63" stroke="#22226a" stroke-width="1.45" fill="none"/><circle cx="74.85" cy="411.03" r="1.6" fill="#22226a"/><circle cx="360.50" cy="411.03" r="1.6" fill="#22226a"/><circle cx="360.50" cy="174.63" r="1.6" fill="#22226a"/><circle cx="271.85" cy="174.63" r="1.6" fill="#22226a"/><circle cx="271.85" cy="282.98" r="1.6" fill="#22226a"/><circle cx="163.50" cy="282.98" r="1.6" fill="#22226a"/><circle cx="163.50" cy="174.63" r="1.6" fill="#22226a"/><circle cx="74.85" cy="174.63" r="1.6" fill="#22226a"/><path d="M75.7 142 H163.5 M75.7 139.5 V146 M163.5 139.5 V146" stroke="#2c2c7c" stroke-width="1.25" fill="none"/><path d="M271.8 142 H360.5 M271.8 139.5 V146 M360.5 139.5 V146" stroke="#2c2c7c" stroke-width="1.25" fill="none"/><path d="M43 174.6 V411 M39.5 174.6 H46.5 M39.5 411 H46.5" stroke="#2c2c7c" stroke-width="1.25" fill="none"/><path d="M393.5 174.6 V411 M390 174.6 H397 M390 411 H397" stroke="#2c2c7c" stroke-width="1.25" fill="none"/><path d="M196.7 174.6 V283 M193.2 174.6 H200.2 M239 174.6 V283 M235.5 174.6 H242.5" stroke="#2c2c7c" stroke-width="1.2" fill="none"/><path d="M163.5 250.7 H271.8" stroke="#2c2c7c" stroke-width="1.2" fill="none"/><path d="M75.7 443.4 H360.5 M75.7 440 V447" stroke="#2c2c7c" stroke-width="1.25" fill="none"/><path d="M360.5 443.4 L355 440.8 V446 Z" fill="#2c2c7c"/><path d="M75.70 142.00 L79.90 140.20 L79.90 143.80 Z" fill="#2c2c7c"/><path d="M163.50 142.00 L159.30 143.80 L159.30 140.20 Z" fill="#2c2c7c"/><path d="M271.80 142.00 L276.00 140.20 L276.00 143.80 Z" fill="#2c2c7c"/><path d="M360.50 142.00 L356.30 143.80 L356.30 140.20 Z" fill="#2c2c7c"/><path d="M43.00 174.60 L44.80 178.80 L41.20 178.80 Z" fill="#2c2c7c"/><path d="M43.00 411.00 L41.20 406.80 L44.80 406.80 Z" fill="#2c2c7c"/><path d="M393.50 174.60 L395.30 178.80 L391.70 178.80 Z" fill="#2c2c7c"/><path d="M393.50 411.00 L391.70 406.80 L395.30 406.80 Z" fill="#2c2c7c"/><path d="M196.70 174.60 L198.50 178.80 L194.90 178.80 Z" fill="#2c2c7c"/><path d="M196.70 283.00 L194.90 278.80 L198.50 278.80 Z" fill="#2c2c7c"/><path d="M239.00 174.60 L240.80 178.80 L237.20 178.80 Z" fill="#2c2c7c"/><path d="M239.00 283.00 L237.20 278.80 L240.80 278.80 Z" fill="#2c2c7c"/><path d="M163.50 250.70 L167.70 248.90 L167.70 252.50 Z" fill="#2c2c7c"/><path d="M271.80 250.70 L267.60 252.50 L267.60 248.90 Z" fill="#2c2c7c"/><path d="M75.70 443.40 L79.90 441.60 L79.90 445.20 Z" fill="#2c2c7c"/><text transform="translate(118.75,136.05) rotate(180)" x="0" y="4.14" text-anchor="middle" font-family="Liberation Sans" font-size="11.5" fill="#2c2c7c" stroke="#2c2c7c" stroke-width="0.25" textLength="19.50" lengthAdjust="spacingAndGlyphs">180</text><text transform="translate(314.75,136.05) rotate(180)" x="0" y="4.14" text-anchor="middle" font-family="Liberation Sans" font-size="11.5" fill="#2c2c7c" stroke="#2c2c7c" stroke-width="0.25" textLength="19.50" lengthAdjust="spacingAndGlyphs">180</text><text transform="translate(35.60,292.25) rotate(90)" x="0" y="4.14" text-anchor="middle" font-family="Liberation Sans" font-size="11.5" fill="#2c2c7c" stroke="#2c2c7c" stroke-width="0.25" textLength="19.50" lengthAdjust="spacingAndGlyphs">480</text><text transform="translate(400.00,293.00) rotate(-90)" x="0" y="4.14" text-anchor="middle" font-family="Liberation Sans" font-size="11.5" fill="#2c2c7c" stroke="#2c2c7c" stroke-width="0.25" textLength="20.00" lengthAdjust="spacingAndGlyphs">480</text><text transform="translate(202.85,229.05) rotate(-90)" x="0" y="4.14" text-anchor="middle" font-family="Liberation Sans" font-size="11.5" fill="#2c2c7c" stroke="#2c2c7c" stroke-width="0.25" textLength="19.50" lengthAdjust="spacingAndGlyphs">220</text><text transform="translate(232.10,228.60) rotate(90)" x="0" y="4.14" text-anchor="middle" font-family="Liberation Sans" font-size="11.5" fill="#2c2c7c" stroke="#2c2c7c" stroke-width="0.25" textLength="19.20" lengthAdjust="spacingAndGlyphs">220</text><text transform="translate(216.90,244.85) rotate(180)" x="0" y="4.14" text-anchor="middle" font-family="Liberation Sans" font-size="11.5" fill="#2c2c7c" stroke="#2c2c7c" stroke-width="0.25" textLength="19.80" lengthAdjust="spacingAndGlyphs">220</text><text transform="translate(216.90,450.20) rotate(0)" x="0" y="4.14" text-anchor="middle" font-family="Liberation Sans" font-size="11.5" fill="#2c2c7c" stroke="#2c2c7c" stroke-width="0.25" textLength="17.20" lengthAdjust="spacingAndGlyphs">580</text><text transform="translate(113.40,160.00) rotate(-90)" x="0" y="3.60" text-anchor="middle" font-family="Liberation Sans" font-size="10" fill="#b39560" stroke="#b39560" stroke-width="0.25" textLength="12.20" lengthAdjust="spacingAndGlyphs">D2</text><text transform="translate(113.75,424.20) rotate(-90)" x="0" y="3.60" text-anchor="middle" font-family="Liberation Sans" font-size="10" fill="#b39560" stroke="#b39560" stroke-width="0.25" textLength="11.60" lengthAdjust="spacingAndGlyphs">D2</text><text transform="translate(61.20,375.70) rotate(0)" x="0" y="3.06" text-anchor="middle" font-family="Liberation Sans" font-size="8.5" fill="#b39560" stroke="#b39560" stroke-width="0.25" textLength="9.20" lengthAdjust="spacingAndGlyphs">D1</text><text transform="translate(375.20,375.80) rotate(0)" x="0" y="3.06" text-anchor="middle" font-family="Liberation Sans" font-size="8.5" fill="#b39560" stroke="#b39560" stroke-width="0.25" textLength="9.60" lengthAdjust="spacingAndGlyphs">D1</text><text transform="translate(78.40,180.60) rotate(0)" x="0" y="3.60" text-anchor="middle" font-family="Liberation Sans" font-size="10" fill="#22226a" stroke="#22226a" stroke-width="0.25" textLength="5.00" lengthAdjust="spacingAndGlyphs">8</text><text transform="translate(166.50,180.60) rotate(0)" x="0" y="3.60" text-anchor="middle" font-family="Liberation Sans" font-size="10" fill="#22226a" stroke="#22226a" stroke-width="0.25" textLength="5.00" lengthAdjust="spacingAndGlyphs">7</text><text transform="translate(274.50,181.60) rotate(0)" x="0" y="3.60" text-anchor="middle" font-family="Liberation Sans" font-size="10" fill="#22226a" stroke="#22226a" stroke-width="0.25" textLength="5.00" lengthAdjust="spacingAndGlyphs">4</text><text transform="translate(363.50,181.60) rotate(0)" x="0" y="3.60" text-anchor="middle" font-family="Liberation Sans" font-size="10" fill="#22226a" stroke="#22226a" stroke-width="0.25" textLength="5.00" lengthAdjust="spacingAndGlyphs">3</text><text transform="translate(165.80,289.40) rotate(0)" x="0" y="3.60" text-anchor="middle" font-family="Liberation Sans" font-size="10" fill="#22226a" stroke="#22226a" stroke-width="0.25" textLength="5.00" lengthAdjust="spacingAndGlyphs">6</text><text transform="translate(273.80,289.40) rotate(0)" x="0" y="3.60" text-anchor="middle" font-family="Liberation Sans" font-size="10" fill="#22226a" stroke="#22226a" stroke-width="0.25" textLength="5.00" lengthAdjust="spacingAndGlyphs">5</text><text transform="translate(77.80,417.10) rotate(0)" x="0" y="3.60" text-anchor="middle" font-family="Liberation Sans" font-size="10" fill="#22226a" stroke="#22226a" stroke-width="0.25" textLength="5.00" lengthAdjust="spacingAndGlyphs">1</text><text transform="translate(362.80,417.40) rotate(0)" x="0" y="3.60" text-anchor="middle" font-family="Liberation Sans" font-size="10" fill="#22226a" stroke="#22226a" stroke-width="0.25" textLength="5.00" lengthAdjust="spacingAndGlyphs">2</text><rect x="99.38" y="371.58" width="39.6" height="19.8" fill="url(#hatch)" stroke="#4a7c7c" stroke-width="1.3"/><path d="M99.38 381.48 H138.97" stroke="#c9ad7e" stroke-width="0.8" opacity="0.7"/><circle cx="119.17" cy="381.48" r="19.7" stroke="#202838" stroke-width="1.1" stroke-dasharray="3.2 2.2" fill="none"/><path d="M119.17 378.28 L122.38 381.48 L119.17 384.68 L115.97 381.48 Z" fill="#6a8a8a" stroke="#1e3838" stroke-width="1.3"/><text transform="translate(119.38,355.23) rotate(0)" x="0" y="2.63" text-anchor="middle" font-family="Liberation Sans" font-size="7.3" fill="#1e1e48" stroke="#1e1e48" stroke-width="0.35" textLength="52.80" lengthAdjust="spacingAndGlyphs">Pa1 ø80/200.0m</text><text transform="translate(118.02,395.43) rotate(0)" x="0" y="3.06" text-anchor="middle" font-family="Liberation Sans" font-size="8.5" fill="#2a6c70" stroke="#2a6c70" stroke-width="0.35" textLength="29.70" lengthAdjust="spacingAndGlyphs">N1 40x80</text><rect x="296.38" y="371.58" width="39.6" height="19.8" fill="url(#hatch)" stroke="#4a7c7c" stroke-width="1.3"/><path d="M296.38 381.48 H335.98" stroke="#c9ad7e" stroke-width="0.8" opacity="0.7"/><circle cx="316.18" cy="381.48" r="19.7" stroke="#202838" stroke-width="1.1" stroke-dasharray="3.2 2.2" fill="none"/><path d="M316.18 378.28 L319.38 381.48 L316.18 384.68 L312.98 381.48 Z" fill="#6a8a8a" stroke="#1e3838" stroke-width="1.3"/><text transform="translate(316.38,355.23) rotate(0)" x="0" y="2.63" text-anchor="middle" font-family="Liberation Sans" font-size="7.3" fill="#1e1e48" stroke="#1e1e48" stroke-width="0.35" textLength="52.80" lengthAdjust="spacingAndGlyphs">Pa2 ø80/200.0m</text><text transform="translate(315.03,395.43) rotate(0)" x="0" y="3.06" text-anchor="middle" font-family="Liberation Sans" font-size="8.5" fill="#2a6c70" stroke="#2a6c70" stroke-width="0.35" textLength="29.70" lengthAdjust="spacingAndGlyphs">N2 40x80</text><rect x="99.38" y="194.28" width="39.6" height="19.8" fill="url(#hatch)" stroke="#4a7c7c" stroke-width="1.3"/><path d="M99.38 204.18 H138.97" stroke="#c9ad7e" stroke-width="0.8" opacity="0.7"/><circle cx="119.17" cy="204.18" r="19.7" stroke="#202838" stroke-width="1.1" stroke-dasharray="3.2 2.2" fill="none"/><path d="M119.17 200.98 L122.38 204.18 L119.17 207.38 L115.97 204.18 Z" fill="#6a8a8a" stroke="#1e3838" stroke-width="1.3"/><text transform="translate(119.38,177.93) rotate(0)" x="0" y="2.63" text-anchor="middle" font-family="Liberation Sans" font-size="7.3" fill="#1e1e48" stroke="#1e1e48" stroke-width="0.35" textLength="52.80" lengthAdjust="spacingAndGlyphs">Pa3 ø80/200.0m</text><text transform="translate(118.02,218.13) rotate(0)" x="0" y="3.06" text-anchor="middle" font-family="Liberation Sans" font-size="8.5" fill="#2a6c70" stroke="#2a6c70" stroke-width="0.35" textLength="29.70" lengthAdjust="spacingAndGlyphs">N3 40x80</text><rect x="296.38" y="194.28" width="39.6" height="19.8" fill="url(#hatch)" stroke="#4a7c7c" stroke-width="1.3"/><path d="M296.38 204.18 H335.98" stroke="#c9ad7e" stroke-width="0.8" opacity="0.7"/><circle cx="316.18" cy="204.18" r="19.7" stroke="#202838" stroke-width="1.1" stroke-dasharray="3.2 2.2" fill="none"/><path d="M316.18 200.98 L319.38 204.18 L316.18 207.38 L312.98 204.18 Z" fill="#6a8a8a" stroke="#1e3838" stroke-width="1.3"/><text transform="translate(316.38,177.93) rotate(0)" x="0" y="2.63" text-anchor="middle" font-family="Liberation Sans" font-size="7.3" fill="#1e1e48" stroke="#1e1e48" stroke-width="0.35" textLength="52.80" lengthAdjust="spacingAndGlyphs">Pa4 ø80/200.0m</text><text transform="translate(315.03,218.13) rotate(0)" x="0" y="3.06" text-anchor="middle" font-family="Liberation Sans" font-size="8.5" fill="#2a6c70" stroke="#2a6c70" stroke-width="0.35" textLength="29.70" lengthAdjust="spacingAndGlyphs">N4 40x80</text></g></svg>
<div style="position:absolute;left:386.60px;top:662.00px;width:1.00px;height:11.00px;background:#000"></div>
</div></body></html>
